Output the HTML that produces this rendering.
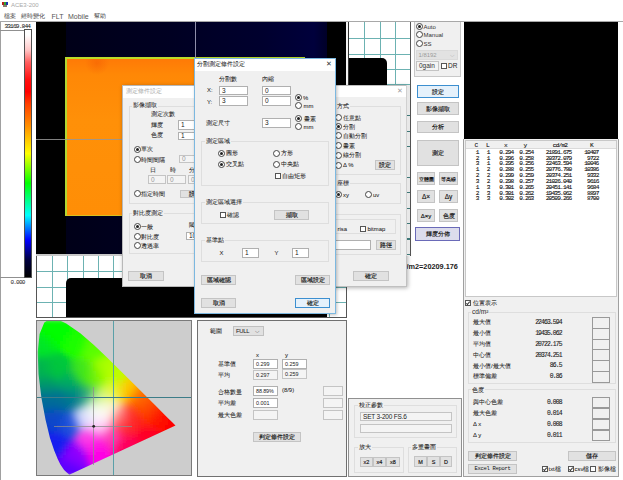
<!DOCTYPE html>
<html><head><meta charset="utf-8">
<style>
*{box-sizing:border-box}
html,body{margin:0;padding:0}
body{width:623px;height:480px;position:relative;overflow:hidden;background:#fff;font-family:"Liberation Sans",sans-serif;font-size:6px;color:#111}
.a{position:absolute}
.t{position:absolute;white-space:nowrap;line-height:6px;height:6px;font-size:5.9px;color:#1c1c1c;-webkit-text-stroke:0.05px currentColor}
.btn{position:absolute;background:#e1e1e1;border:1px solid #c4c4c4;display:flex;align-items:center;justify-content:center;white-space:nowrap;font-size:5.9px;line-height:6px;color:#111;-webkit-text-stroke:0.15px currentColor}
.dbtn{border-color:#3c8fd0;background:#e5f1fb}
.tb{position:absolute;background:#fff;border:1px solid #b0b0b0;font-size:6.5px;line-height:6px;padding-left:2px;display:flex;align-items:center;white-space:nowrap;color:#222}
.tbd{background:#f4f4f4;border-color:#c4c4c4;color:#999}
.rd{position:absolute;width:7px;height:7px;border:1px solid #444;border-radius:50%;background:#fff}
.rd.on::after{content:"";position:absolute;left:1px;top:1px;width:3px;height:3px;background:#222;border-radius:50%}
.ck{position:absolute;width:6px;height:6px;border:1px solid #555;background:#fff}
.ck.on::after{content:"";box-sizing:content-box;position:absolute;left:1.2px;top:-0.2px;width:1.4px;height:3px;border:solid #333;border-width:0 1px 1px 0;transform:rotate(40deg)}
.grp{position:absolute;border:1px solid #dedede}
.dlg{position:absolute;background:#f0f0f0}
.gv{position:absolute;width:1px;background:#3f9898}
.gh{position:absolute;height:1px;background:#3f9898}
</style></head><body>
<div class="a" style="left:2px;top:2px;width:6px;height:3px;background:linear-gradient(90deg,#b82020 0 33%,#30a030 33% 66%,#2030b0 66%)"></div>
<div class="a" style="left:3px;top:5px;width:4px;height:2px;background:#8a7a70"></div>
<div class="t" style="left:11.0px;top:2.3px;font-size:6px;line-height:6px;height:6px;color:#a8a8a8;-webkit-text-stroke:0">ACE3-200</div>
<div class="t" style="left:4.0px;top:13.0px;color:#555">檔案</div>
<div class="t" style="left:21.0px;top:13.0px;color:#555">經時變化</div>
<div class="t" style="left:51.5px;top:12.5px;font-size:7px;line-height:7px;height:7px;color:#555;-webkit-text-stroke:0">FLT</div>
<div class="t" style="left:68.0px;top:12.5px;font-size:7px;line-height:7px;height:7px;color:#555;-webkit-text-stroke:0">Mobile</div>
<div class="t" style="left:94.0px;top:13.0px;color:#555">幫助</div>
<div class="a" style="left:0px;top:21px;width:623px;height:1px;background:#a8a8a8"></div>
<div class="a" style="left:0px;top:22px;width:1px;height:458px;background:#a0a0a0"></div>
<div class="t" style="left:4.4px;top:23.8px;font-family:'Liberation Mono',monospace;font-size:6.2px;letter-spacing:-0.85px;color:#222">33169.844</div>
<div class="a" style="left:0px;top:30px;width:25px;height:1px;background:#909090"></div>
<div class="a" style="left:0px;top:277px;width:25px;height:1px;background:#909090"></div>
<div class="a" style="left:24px;top:29px;width:8px;height:249px;border:1px solid #505050;background:linear-gradient(180deg,#fff 0%,#fff 2%,#ffc8c8 8%,#ff6060 13%,#ff1010 20%,#ff0000 25%,#ff4000 30%,#ff9000 39%,#ffff00 50%,#00ff00 62%,#00ffff 75%,#0000ff 85%,#000040 93%,#000 100%)"></div>
<div class="t" style="left:10.5px;top:279.5px;font-family:'Liberation Mono',monospace;font-size:6px;letter-spacing:-0.8px;color:#333">0.000</div>
<div class="a" style="left:36px;top:22px;width:310px;height:232px;background:#000"></div>
<div class="a" style="left:66px;top:22px;width:261px;height:232px;background:linear-gradient(90deg,#000018 0%,#000022 40%,#00002e 75%,#00003c 95%,#000028 100%)"></div>
<div class="a" style="left:65px;top:57px;width:240px;height:159px;background:radial-gradient(circle at 30px 4px,rgba(235,70,0,.3) 0,rgba(235,70,0,0) 12px),linear-gradient(180deg,#ff7a06 0%,#ff8806 10%,#ff9008 40%,#ff8e06 100%);border-top:2px solid #bcdc28;border-left:2px solid #b0d830;border-bottom:1px solid #d8c020"></div>
<div class="a" style="left:36px;top:139px;width:100px;height:1px;background:rgba(150,150,150,.85)"></div>
<div class="a" style="left:195px;top:22px;width:1px;height:36px;background:#8e8eaa"></div>
<div class="a" style="left:36px;top:254px;width:310px;height:2px;background:#c8c8c8"></div>
<div class="a" style="left:36px;top:256px;width:311px;height:62px;background:#fff;border-left:1px solid #555;border-bottom:1px solid #555"></div>
<div class="a" style="left:52px;top:256px;width:1px;height:61px;background:#6cb2b2"></div>
<div class="a" style="left:67px;top:256px;width:1px;height:61px;background:#6cb2b2"></div>
<div class="a" style="left:83px;top:256px;width:1px;height:61px;background:#6cb2b2"></div>
<div class="a" style="left:98px;top:256px;width:1px;height:61px;background:#6cb2b2"></div>
<div class="a" style="left:113px;top:256px;width:1px;height:61px;background:#6cb2b2"></div>
<div class="a" style="left:129px;top:256px;width:1px;height:61px;background:#6cb2b2"></div>
<div class="a" style="left:144px;top:256px;width:1px;height:61px;background:#6cb2b2"></div>
<div class="a" style="left:160px;top:256px;width:1px;height:61px;background:#6cb2b2"></div>
<div class="a" style="left:175px;top:256px;width:1px;height:61px;background:#6cb2b2"></div>
<div class="a" style="left:190px;top:256px;width:1px;height:61px;background:#6cb2b2"></div>
<div class="a" style="left:206px;top:256px;width:1px;height:61px;background:#6cb2b2"></div>
<div class="a" style="left:221px;top:256px;width:1px;height:61px;background:#6cb2b2"></div>
<div class="a" style="left:237px;top:256px;width:1px;height:61px;background:#6cb2b2"></div>
<div class="a" style="left:252px;top:256px;width:1px;height:61px;background:#6cb2b2"></div>
<div class="a" style="left:267px;top:256px;width:1px;height:61px;background:#6cb2b2"></div>
<div class="a" style="left:283px;top:256px;width:1px;height:61px;background:#6cb2b2"></div>
<div class="a" style="left:298px;top:256px;width:1px;height:61px;background:#6cb2b2"></div>
<div class="a" style="left:314px;top:256px;width:1px;height:61px;background:#6cb2b2"></div>
<div class="a" style="left:329px;top:256px;width:1px;height:61px;background:#6cb2b2"></div>
<div class="a" style="left:37px;top:271px;width:309px;height:1px;background:#6cb2b2"></div>
<div class="a" style="left:37px;top:287px;width:309px;height:1px;background:#6cb2b2"></div>
<div class="a" style="left:37px;top:302px;width:309px;height:1px;background:#6cb2b2"></div>
<div class="a" style="left:66px;top:278px;width:261px;height:39px;background:#000;border-top-left-radius:5px"></div>
<div class="a" style="left:346px;top:256px;width:1px;height:62px;background:#555"></div>
<div class="a" style="left:346px;top:22px;width:3px;height:234px;background:#f4f4f4"></div>
<div class="a" style="left:348px;top:22px;width:62px;height:234px;background:#fff;border-left:1px solid #333"></div>
<div class="a" style="left:364px;top:22px;width:1px;height:234px;background:#6cb2b2"></div>
<div class="a" style="left:380px;top:22px;width:1px;height:234px;background:#6cb2b2"></div>
<div class="a" style="left:395px;top:22px;width:1px;height:234px;background:#6cb2b2"></div>
<div class="a" style="left:349px;top:38px;width:61px;height:1px;background:#6cb2b2"></div>
<div class="a" style="left:349px;top:54px;width:61px;height:1px;background:#6cb2b2"></div>
<div class="a" style="left:349px;top:69px;width:61px;height:1px;background:#6cb2b2"></div>
<div class="a" style="left:349px;top:84px;width:61px;height:2px;background:#6cb2b2"></div>
<div class="a" style="left:349px;top:100px;width:61px;height:1px;background:#6cb2b2"></div>
<div class="a" style="left:349px;top:115px;width:61px;height:1px;background:#6cb2b2"></div>
<div class="a" style="left:349px;top:131px;width:61px;height:1px;background:#6cb2b2"></div>
<div class="a" style="left:349px;top:146px;width:61px;height:1px;background:#6cb2b2"></div>
<div class="a" style="left:349px;top:162px;width:61px;height:0px;background:#6cb2b2"></div>
<div class="a" style="left:349px;top:177px;width:61px;height:1px;background:#6cb2b2"></div>
<div class="a" style="left:349px;top:192px;width:61px;height:1px;background:#6cb2b2"></div>
<div class="a" style="left:349px;top:208px;width:61px;height:1px;background:#6cb2b2"></div>
<div class="a" style="left:349px;top:223px;width:61px;height:1px;background:#6cb2b2"></div>
<div class="a" style="left:349px;top:238px;width:61px;height:2px;background:#6cb2b2"></div>
<div class="a" style="left:349px;top:254px;width:61px;height:1px;background:#6cb2b2"></div>
<div class="a" style="left:349px;top:58px;width:38px;height:198px;background:#000;border-top-right-radius:5px"></div>
<div class="a" style="left:410px;top:22px;width:1px;height:234px;background:#555"></div>
<div class="a" style="left:36px;top:320px;width:156px;height:156px;background:#cdcdcd;border:1px solid #7a7a7a;overflow:hidden"><svg width="156" height="156" viewBox="37 321 156 156" style="position:absolute;left:0;top:0"><defs><clipPath id="hs"><polygon points="69.8,474.6 69.7,474.6 69.3,474.5 68.8,474.2 68.0,473.4 66.5,472.2 64.1,469.9 60.4,464.6 57.7,459.1 54.2,450.5 49.9,437.7 45.6,419.9 41.4,397.7 38.5,374.0 37.7,352.1 39.6,334.1 44.3,322.4 51.0,318.3 58.5,319.8 66.2,323.6 80.3,333.3 93.9,345.0 107.3,357.8 120.7,370.9 133.6,383.8 145.4,395.5 155.2,405.3 167.3,417.4 172.5,422.6 175.5,425.5"/></clipPath><filter id="bl" x="-10%" y="-10%" width="120%" height="120%"><feGaussianBlur stdDeviation="2"/></filter></defs><g clip-path="url(#hs)"><g filter="url(#bl)"><path fill="#00fe00" d="M36 320h3v3h-3z"/><path fill="#00fe00" d="M39 320h3v3h-3z"/><path fill="#00fe00" d="M42 320h3v3h-3z"/><path fill="#00fe00" d="M45 320h3v3h-3z"/><path fill="#00fe00" d="M48 320h3v3h-3z"/><path fill="#00fe00" d="M51 320h3v3h-3z"/><path fill="#00fe00" d="M54 320h3v3h-3z"/><path fill="#00fe00" d="M57 320h3v3h-3z"/><path fill="#00fe00" d="M60 320h3v3h-3z"/><path fill="#00fe00" d="M63 320h3v3h-3z"/><path fill="#01fe00" d="M66 320h3v3h-3z"/><path fill="#03fe00" d="M69 320h3v3h-3z"/><path fill="#07fe00" d="M72 320h3v3h-3z"/><path fill="#00fe00" d="M36 323h3v3h-3z"/><path fill="#00fe00" d="M39 323h3v3h-3z"/><path fill="#00fe00" d="M42 323h3v3h-3z"/><path fill="#00fe00" d="M45 323h3v3h-3z"/><path fill="#00fe00" d="M48 323h3v3h-3z"/><path fill="#00fe00" d="M51 323h3v3h-3z"/><path fill="#00fe00" d="M54 323h3v3h-3z"/><path fill="#00fe00" d="M57 323h3v3h-3z"/><path fill="#00fe00" d="M60 323h3v3h-3z"/><path fill="#01fe00" d="M63 323h3v3h-3z"/><path fill="#02fe00" d="M66 323h3v3h-3z"/><path fill="#05fe00" d="M69 323h3v3h-3z"/><path fill="#0bfe00" d="M72 323h3v3h-3z"/><path fill="#12fe00" d="M75 323h3v3h-3z"/><path fill="#18fe00" d="M78 323h3v3h-3z"/><path fill="#00fd02" d="M36 326h3v3h-3z"/><path fill="#00fd01" d="M39 326h3v3h-3z"/><path fill="#00fe01" d="M42 326h3v3h-3z"/><path fill="#00fe00" d="M45 326h3v3h-3z"/><path fill="#00fe00" d="M48 326h3v3h-3z"/><path fill="#00fe00" d="M51 326h3v3h-3z"/><path fill="#00fe00" d="M54 326h3v3h-3z"/><path fill="#00fe00" d="M57 326h3v3h-3z"/><path fill="#00fe00" d="M60 326h3v3h-3z"/><path fill="#01fe00" d="M63 326h3v3h-3z"/><path fill="#04fe00" d="M66 326h3v3h-3z"/><path fill="#09fe00" d="M69 326h3v3h-3z"/><path fill="#10fe00" d="M72 326h3v3h-3z"/><path fill="#16fe00" d="M75 326h3v3h-3z"/><path fill="#1bfe00" d="M78 326h3v3h-3z"/><path fill="#1dfe00" d="M81 326h3v3h-3z"/><path fill="#00fa06" d="M36 329h3v3h-3z"/><path fill="#00fb05" d="M39 329h3v3h-3z"/><path fill="#00fc04" d="M42 329h3v3h-3z"/><path fill="#00fd02" d="M45 329h3v3h-3z"/><path fill="#00fe01" d="M48 329h3v3h-3z"/><path fill="#00fe00" d="M51 329h3v3h-3z"/><path fill="#00fe00" d="M54 329h3v3h-3z"/><path fill="#00fe00" d="M57 329h3v3h-3z"/><path fill="#01fe00" d="M60 329h3v3h-3z"/><path fill="#02fe00" d="M63 329h3v3h-3z"/><path fill="#06fe00" d="M66 329h3v3h-3z"/><path fill="#0dfe00" d="M69 329h3v3h-3z"/><path fill="#14fe00" d="M72 329h3v3h-3z"/><path fill="#19fe00" d="M75 329h3v3h-3z"/><path fill="#1cfe00" d="M78 329h3v3h-3z"/><path fill="#1ffe00" d="M81 329h3v3h-3z"/><path fill="#24fe00" d="M84 329h3v3h-3z"/><path fill="#00f50f" d="M36 332h3v3h-3z"/><path fill="#00f60d" d="M39 332h3v3h-3z"/><path fill="#00f809" d="M42 332h3v3h-3z"/><path fill="#00fa06" d="M45 332h3v3h-3z"/><path fill="#00fc03" d="M48 332h3v3h-3z"/><path fill="#00fd01" d="M51 332h3v3h-3z"/><path fill="#00fe00" d="M54 332h3v3h-3z"/><path fill="#00fe00" d="M57 332h3v3h-3z"/><path fill="#01fe00" d="M60 332h3v3h-3z"/><path fill="#04fe00" d="M63 332h3v3h-3z"/><path fill="#0afe00" d="M66 332h3v3h-3z"/><path fill="#11fe00" d="M69 332h3v3h-3z"/><path fill="#17fe00" d="M72 332h3v3h-3z"/><path fill="#1bfe00" d="M75 332h3v3h-3z"/><path fill="#1dfe00" d="M78 332h3v3h-3z"/><path fill="#21fe00" d="M81 332h3v3h-3z"/><path fill="#28fe00" d="M84 332h3v3h-3z"/><path fill="#37fe00" d="M87 332h3v3h-3z"/><path fill="#00ee1a" d="M36 335h3v3h-3z"/><path fill="#00f017" d="M39 335h3v3h-3z"/><path fill="#00f312" d="M42 335h3v3h-3z"/><path fill="#00f60d" d="M45 335h3v3h-3z"/><path fill="#00f908" d="M48 335h3v3h-3z"/><path fill="#00fc04" d="M51 335h3v3h-3z"/><path fill="#00fd01" d="M54 335h3v3h-3z"/><path fill="#01fe00" d="M57 335h3v3h-3z"/><path fill="#03fe00" d="M60 335h3v3h-3z"/><path fill="#07fe00" d="M63 335h3v3h-3z"/><path fill="#0efe00" d="M66 335h3v3h-3z"/><path fill="#15fe00" d="M69 335h3v3h-3z"/><path fill="#1afe00" d="M72 335h3v3h-3z"/><path fill="#1cfe00" d="M75 335h3v3h-3z"/><path fill="#1ffe00" d="M78 335h3v3h-3z"/><path fill="#23fe00" d="M81 335h3v3h-3z"/><path fill="#2dfe00" d="M84 335h3v3h-3z"/><path fill="#3ffe00" d="M87 335h3v3h-3z"/><path fill="#4efe00" d="M90 335h3v3h-3z"/><path fill="#56fe00" d="M93 335h3v3h-3z"/><path fill="#00e922" d="M36 338h3v3h-3z"/><path fill="#00ea20" d="M39 338h3v3h-3z"/><path fill="#00ed1c" d="M42 338h3v3h-3z"/><path fill="#00f116" d="M45 338h3v3h-3z"/><path fill="#00f50e" d="M48 338h3v3h-3z"/><path fill="#00f908" d="M51 338h3v3h-3z"/><path fill="#00fc04" d="M54 338h3v3h-3z"/><path fill="#01fd01" d="M57 338h3v3h-3z"/><path fill="#04fe00" d="M60 338h3v3h-3z"/><path fill="#0afe00" d="M63 338h3v3h-3z"/><path fill="#12fe00" d="M66 338h3v3h-3z"/><path fill="#18fe00" d="M69 338h3v3h-3z"/><path fill="#1bfe00" d="M72 338h3v3h-3z"/><path fill="#1dfe00" d="M75 338h3v3h-3z"/><path fill="#20fe00" d="M78 338h3v3h-3z"/><path fill="#26fe00" d="M81 338h3v3h-3z"/><path fill="#34fe00" d="M84 338h3v3h-3z"/><path fill="#45fe00" d="M87 338h3v3h-3z"/><path fill="#52fe00" d="M90 338h3v3h-3z"/><path fill="#57fe00" d="M93 338h3v3h-3z"/><path fill="#59fe00" d="M96 338h3v3h-3z"/><path fill="#00e725" d="M36 341h3v3h-3z"/><path fill="#00e824" d="M39 341h3v3h-3z"/><path fill="#00e922" d="M42 341h3v3h-3z"/><path fill="#00ec1d" d="M45 341h3v3h-3z"/><path fill="#00f016" d="M48 341h3v3h-3z"/><path fill="#00f50e" d="M51 341h3v3h-3z"/><path fill="#00fa07" d="M54 341h3v3h-3z"/><path fill="#02fc03" d="M57 341h3v3h-3z"/><path fill="#07fe01" d="M60 341h3v3h-3z"/><path fill="#0efe00" d="M63 341h3v3h-3z"/><path fill="#15fe00" d="M66 341h3v3h-3z"/><path fill="#1afe00" d="M69 341h3v3h-3z"/><path fill="#1dfe00" d="M72 341h3v3h-3z"/><path fill="#1efe00" d="M75 341h3v3h-3z"/><path fill="#22fe00" d="M78 341h3v3h-3z"/><path fill="#2bfe00" d="M81 341h3v3h-3z"/><path fill="#3bfe00" d="M84 341h3v3h-3z"/><path fill="#4bfe00" d="M87 341h3v3h-3z"/><path fill="#55fe00" d="M90 341h3v3h-3z"/><path fill="#58fe00" d="M93 341h3v3h-3z"/><path fill="#59fe00" d="M96 341h3v3h-3z"/><path fill="#5afe00" d="M99 341h3v3h-3z"/><path fill="#00e627" d="M36 344h3v3h-3z"/><path fill="#00e626" d="M39 344h3v3h-3z"/><path fill="#00e725" d="M42 344h3v3h-3z"/><path fill="#00e922" d="M45 344h3v3h-3z"/><path fill="#00ec1e" d="M48 344h3v3h-3z"/><path fill="#00f016" d="M51 344h3v3h-3z"/><path fill="#01f50e" d="M54 344h3v3h-3z"/><path fill="#03fa07" d="M57 344h3v3h-3z"/><path fill="#09fd02" d="M60 344h3v3h-3z"/><path fill="#12fe00" d="M63 344h3v3h-3z"/><path fill="#18fe00" d="M66 344h3v3h-3z"/><path fill="#1cfe00" d="M69 344h3v3h-3z"/><path fill="#1dfe00" d="M72 344h3v3h-3z"/><path fill="#1ffe00" d="M75 344h3v3h-3z"/><path fill="#25fe00" d="M78 344h3v3h-3z"/><path fill="#30fe00" d="M81 344h3v3h-3z"/><path fill="#42fe00" d="M84 344h3v3h-3z"/><path fill="#50fe00" d="M87 344h3v3h-3z"/><path fill="#56fe00" d="M90 344h3v3h-3z"/><path fill="#59fe00" d="M93 344h3v3h-3z"/><path fill="#5afe00" d="M96 344h3v3h-3z"/><path fill="#5afe00" d="M99 344h3v3h-3z"/><path fill="#5afe00" d="M102 344h3v3h-3z"/><path fill="#00e528" d="M36 347h3v3h-3z"/><path fill="#00e527" d="M39 347h3v3h-3z"/><path fill="#00e627" d="M42 347h3v3h-3z"/><path fill="#00e626" d="M45 347h3v3h-3z"/><path fill="#00e823" d="M48 347h3v3h-3z"/><path fill="#00eb1e" d="M51 347h3v3h-3z"/><path fill="#01ef17" d="M54 347h3v3h-3z"/><path fill="#04f40e" d="M57 347h3v3h-3z"/><path fill="#0bf906" d="M60 347h3v3h-3z"/><path fill="#14fd02" d="M63 347h3v3h-3z"/><path fill="#1afe00" d="M66 347h3v3h-3z"/><path fill="#1cfe00" d="M69 347h3v3h-3z"/><path fill="#1efe00" d="M72 347h3v3h-3z"/><path fill="#21fe00" d="M75 347h3v3h-3z"/><path fill="#28fe00" d="M78 347h3v3h-3z"/><path fill="#37fe00" d="M81 347h3v3h-3z"/><path fill="#49fe00" d="M84 347h3v3h-3z"/><path fill="#53fe00" d="M87 347h3v3h-3z"/><path fill="#58fe00" d="M90 347h3v3h-3z"/><path fill="#59fe00" d="M93 347h3v3h-3z"/><path fill="#5afe00" d="M96 347h3v3h-3z"/><path fill="#5bfe00" d="M99 347h3v3h-3z"/><path fill="#5dfe00" d="M102 347h3v3h-3z"/><path fill="#5ffe00" d="M105 347h3v3h-3z"/><path fill="#00e329" d="M36 350h3v3h-3z"/><path fill="#00e329" d="M39 350h3v3h-3z"/><path fill="#00e329" d="M42 350h3v3h-3z"/><path fill="#00e329" d="M45 350h3v3h-3z"/><path fill="#00e328" d="M48 350h3v3h-3z"/><path fill="#00e327" d="M51 350h3v3h-3z"/><path fill="#00e324" d="M54 350h3v3h-3z"/><path fill="#03e61e" d="M57 350h3v3h-3z"/><path fill="#0aed14" d="M60 350h3v3h-3z"/><path fill="#14f609" d="M63 350h3v3h-3z"/><path fill="#1afb03" d="M66 350h3v3h-3z"/><path fill="#1dfd01" d="M69 350h3v3h-3z"/><path fill="#1ffe00" d="M72 350h3v3h-3z"/><path fill="#23fe00" d="M75 350h3v3h-3z"/><path fill="#2efe00" d="M78 350h3v3h-3z"/><path fill="#3ffe00" d="M81 350h3v3h-3z"/><path fill="#4efe00" d="M84 350h3v3h-3z"/><path fill="#56fe00" d="M87 350h3v3h-3z"/><path fill="#59fe00" d="M90 350h3v3h-3z"/><path fill="#5bfe00" d="M93 350h3v3h-3z"/><path fill="#5dfe00" d="M96 350h3v3h-3z"/><path fill="#5ffe00" d="M99 350h3v3h-3z"/><path fill="#64fe00" d="M102 350h3v3h-3z"/><path fill="#6bfe00" d="M105 350h3v3h-3z"/><path fill="#75fe00" d="M108 350h3v3h-3z"/><path fill="#00dc2f" d="M36 353h3v3h-3z"/><path fill="#00dc2f" d="M39 353h3v3h-3z"/><path fill="#00dc2f" d="M42 353h3v3h-3z"/><path fill="#00da30" d="M45 353h3v3h-3z"/><path fill="#00d831" d="M48 353h3v3h-3z"/><path fill="#00d632" d="M51 353h3v3h-3z"/><path fill="#00d333" d="M54 353h3v3h-3z"/><path fill="#01d232" d="M57 353h3v3h-3z"/><path fill="#04d62c" d="M60 353h3v3h-3z"/><path fill="#0ce21f" d="M63 353h3v3h-3z"/><path fill="#15f00f" d="M66 353h3v3h-3z"/><path fill="#1cf906" d="M69 353h3v3h-3z"/><path fill="#20fc02" d="M72 353h3v3h-3z"/><path fill="#27fd02" d="M75 353h3v3h-3z"/><path fill="#34fd02" d="M78 353h3v3h-3z"/><path fill="#45fd01" d="M81 353h3v3h-3z"/><path fill="#52fd01" d="M84 353h3v3h-3z"/><path fill="#58fe00" d="M87 353h3v3h-3z"/><path fill="#5cfe00" d="M90 353h3v3h-3z"/><path fill="#5ffe00" d="M93 353h3v3h-3z"/><path fill="#64fe00" d="M96 353h3v3h-3z"/><path fill="#6bfe00" d="M99 353h3v3h-3z"/><path fill="#74fe00" d="M102 353h3v3h-3z"/><path fill="#81fe00" d="M105 353h3v3h-3z"/><path fill="#8efe00" d="M108 353h3v3h-3z"/><path fill="#9afe00" d="M111 353h3v3h-3z"/><path fill="#00cc3c" d="M36 356h3v3h-3z"/><path fill="#00cc3b" d="M39 356h3v3h-3z"/><path fill="#00cc3b" d="M42 356h3v3h-3z"/><path fill="#00cb3b" d="M45 356h3v3h-3z"/><path fill="#00ca3b" d="M48 356h3v3h-3z"/><path fill="#00ca3b" d="M51 356h3v3h-3z"/><path fill="#00c93b" d="M54 356h3v3h-3z"/><path fill="#00c93a" d="M57 356h3v3h-3z"/><path fill="#01ca39" d="M60 356h3v3h-3z"/><path fill="#03cf34" d="M63 356h3v3h-3z"/><path fill="#0bda28" d="M66 356h3v3h-3z"/><path fill="#17e917" d="M69 356h3v3h-3z"/><path fill="#23f30d" d="M72 356h3v3h-3z"/><path fill="#2ff50a" d="M75 356h3v3h-3z"/><path fill="#3cf60a" d="M78 356h3v3h-3z"/><path fill="#49f708" d="M81 356h3v3h-3z"/><path fill="#53fa05" d="M84 356h3v3h-3z"/><path fill="#5bfc03" d="M87 356h3v3h-3z"/><path fill="#61fd01" d="M90 356h3v3h-3z"/><path fill="#69fe00" d="M93 356h3v3h-3z"/><path fill="#74fe00" d="M96 356h3v3h-3z"/><path fill="#80fe00" d="M99 356h3v3h-3z"/><path fill="#8cfe00" d="M102 356h3v3h-3z"/><path fill="#98fe00" d="M105 356h3v3h-3z"/><path fill="#a1fe00" d="M108 356h3v3h-3z"/><path fill="#a7fe00" d="M111 356h3v3h-3z"/><path fill="#acfe00" d="M114 356h3v3h-3z"/><path fill="#00bd48" d="M36 359h3v3h-3z"/><path fill="#00bd47" d="M39 359h3v3h-3z"/><path fill="#00bf46" d="M42 359h3v3h-3z"/><path fill="#00c044" d="M45 359h3v3h-3z"/><path fill="#00c341" d="M48 359h3v3h-3z"/><path fill="#00c53f" d="M51 359h3v3h-3z"/><path fill="#00c63d" d="M54 359h3v3h-3z"/><path fill="#00c73c" d="M57 359h3v3h-3z"/><path fill="#00c83c" d="M60 359h3v3h-3z"/><path fill="#01c93a" d="M63 359h3v3h-3z"/><path fill="#05cd36" d="M66 359h3v3h-3z"/><path fill="#14d72c" d="M69 359h3v3h-3z"/><path fill="#29e31f" d="M72 359h3v3h-3z"/><path fill="#36e919" d="M75 359h3v3h-3z"/><path fill="#3eeb17" d="M78 359h3v3h-3z"/><path fill="#46ed13" d="M81 359h3v3h-3z"/><path fill="#50f10f" d="M84 359h3v3h-3z"/><path fill="#5cf509" d="M87 359h3v3h-3z"/><path fill="#6af905" d="M90 359h3v3h-3z"/><path fill="#79fc02" d="M93 359h3v3h-3z"/><path fill="#88fd00" d="M96 359h3v3h-3z"/><path fill="#94fe00" d="M99 359h3v3h-3z"/><path fill="#9efe00" d="M102 359h3v3h-3z"/><path fill="#a4fe00" d="M105 359h3v3h-3z"/><path fill="#a9fe00" d="M108 359h3v3h-3z"/><path fill="#adfe00" d="M111 359h3v3h-3z"/><path fill="#b0fe00" d="M114 359h3v3h-3z"/><path fill="#b4fe00" d="M117 359h3v3h-3z"/><path fill="#00b64d" d="M36 362h3v3h-3z"/><path fill="#00b74c" d="M39 362h3v3h-3z"/><path fill="#00b94a" d="M42 362h3v3h-3z"/><path fill="#00bc47" d="M45 362h3v3h-3z"/><path fill="#00c043" d="M48 362h3v3h-3z"/><path fill="#00c340" d="M51 362h3v3h-3z"/><path fill="#00c53e" d="M54 362h3v3h-3z"/><path fill="#00c63d" d="M57 362h3v3h-3z"/><path fill="#00c73c" d="M60 362h3v3h-3z"/><path fill="#01c73c" d="M63 362h3v3h-3z"/><path fill="#05c93a" d="M66 362h3v3h-3z"/><path fill="#16d132" d="M69 362h3v3h-3z"/><path fill="#2cdd26" d="M72 362h3v3h-3z"/><path fill="#38e41f" d="M75 362h3v3h-3z"/><path fill="#3ee61c" d="M78 362h3v3h-3z"/><path fill="#43e819" d="M81 362h3v3h-3z"/><path fill="#4beb15" d="M84 362h3v3h-3z"/><path fill="#59ef10" d="M87 362h3v3h-3z"/><path fill="#6df409" d="M90 362h3v3h-3z"/><path fill="#82f904" d="M93 362h3v3h-3z"/><path fill="#93fc01" d="M96 362h3v3h-3z"/><path fill="#9efd00" d="M99 362h3v3h-3z"/><path fill="#a4fe00" d="M102 362h3v3h-3z"/><path fill="#a9fe00" d="M105 362h3v3h-3z"/><path fill="#adfe00" d="M108 362h3v3h-3z"/><path fill="#b0fe00" d="M111 362h3v3h-3z"/><path fill="#b3fe00" d="M114 362h3v3h-3z"/><path fill="#b6fe00" d="M117 362h3v3h-3z"/><path fill="#b8fe00" d="M120 362h3v3h-3z"/><path fill="#00b44f" d="M36 365h3v3h-3z"/><path fill="#00b54e" d="M39 365h3v3h-3z"/><path fill="#00b74c" d="M42 365h3v3h-3z"/><path fill="#00ba49" d="M45 365h3v3h-3z"/><path fill="#00be45" d="M48 365h3v3h-3z"/><path fill="#00c241" d="M51 365h3v3h-3z"/><path fill="#00c43f" d="M54 365h3v3h-3z"/><path fill="#00c63d" d="M57 365h3v3h-3z"/><path fill="#00c63d" d="M60 365h3v3h-3z"/><path fill="#01c63d" d="M63 365h3v3h-3z"/><path fill="#07c83d" d="M66 365h3v3h-3z"/><path fill="#18cf36" d="M69 365h3v3h-3z"/><path fill="#2dda2a" d="M72 365h3v3h-3z"/><path fill="#38e122" d="M75 365h3v3h-3z"/><path fill="#3de51e" d="M78 365h3v3h-3z"/><path fill="#42e71b" d="M81 365h3v3h-3z"/><path fill="#4ae917" d="M84 365h3v3h-3z"/><path fill="#57ed12" d="M87 365h3v3h-3z"/><path fill="#6af10b" d="M90 365h3v3h-3z"/><path fill="#80f606" d="M93 365h3v3h-3z"/><path fill="#92fa02" d="M96 365h3v3h-3z"/><path fill="#9efc00" d="M99 365h3v3h-3z"/><path fill="#a5fd00" d="M102 365h3v3h-3z"/><path fill="#aafe00" d="M105 365h3v3h-3z"/><path fill="#aefe00" d="M108 365h3v3h-3z"/><path fill="#b2fe00" d="M111 365h3v3h-3z"/><path fill="#b5fe00" d="M114 365h3v3h-3z"/><path fill="#b8fe00" d="M117 365h3v3h-3z"/><path fill="#bafe00" d="M120 365h3v3h-3z"/><path fill="#bcfe00" d="M123 365h3v3h-3z"/><path fill="#00b350" d="M36 368h3v3h-3z"/><path fill="#00b44f" d="M39 368h3v3h-3z"/><path fill="#00b64d" d="M42 368h3v3h-3z"/><path fill="#00b94a" d="M45 368h3v3h-3z"/><path fill="#00bd46" d="M48 368h3v3h-3z"/><path fill="#00c043" d="M51 368h3v3h-3z"/><path fill="#00c340" d="M54 368h3v3h-3z"/><path fill="#00c53f" d="M57 368h3v3h-3z"/><path fill="#00c53f" d="M60 368h3v3h-3z"/><path fill="#01c440" d="M63 368h3v3h-3z"/><path fill="#08c441" d="M66 368h3v3h-3z"/><path fill="#18cb3b" d="M69 368h3v3h-3z"/><path fill="#2ad62f" d="M72 368h3v3h-3z"/><path fill="#35df25" d="M75 368h3v3h-3z"/><path fill="#3ce31f" d="M78 368h3v3h-3z"/><path fill="#42e61b" d="M81 368h3v3h-3z"/><path fill="#4ae917" d="M84 368h3v3h-3z"/><path fill="#55ec12" d="M87 368h3v3h-3z"/><path fill="#66f00c" d="M90 368h3v3h-3z"/><path fill="#7af406" d="M93 368h3v3h-3z"/><path fill="#8cf803" d="M96 368h3v3h-3z"/><path fill="#9afb01" d="M99 368h3v3h-3z"/><path fill="#a4fd00" d="M102 368h3v3h-3z"/><path fill="#abfe00" d="M105 368h3v3h-3z"/><path fill="#b0fe00" d="M108 368h3v3h-3z"/><path fill="#b4fe00" d="M111 368h3v3h-3z"/><path fill="#b7fe00" d="M114 368h3v3h-3z"/><path fill="#bafe00" d="M117 368h3v3h-3z"/><path fill="#bcfe00" d="M120 368h3v3h-3z"/><path fill="#befd00" d="M123 368h3v3h-3z"/><path fill="#c1fb00" d="M126 368h3v3h-3z"/><path fill="#00b152" d="M36 371h3v3h-3z"/><path fill="#00b152" d="M39 371h3v3h-3z"/><path fill="#00b350" d="M42 371h3v3h-3z"/><path fill="#00b54e" d="M45 371h3v3h-3z"/><path fill="#00b94a" d="M48 371h3v3h-3z"/><path fill="#00bd46" d="M51 371h3v3h-3z"/><path fill="#00c143" d="M54 371h3v3h-3z"/><path fill="#00c241" d="M57 371h3v3h-3z"/><path fill="#00c243" d="M60 371h3v3h-3z"/><path fill="#02bf47" d="M63 371h3v3h-3z"/><path fill="#08be4a" d="M66 371h3v3h-3z"/><path fill="#14c344" d="M69 371h3v3h-3z"/><path fill="#24cf37" d="M72 371h3v3h-3z"/><path fill="#31da2b" d="M75 371h3v3h-3z"/><path fill="#3ae122" d="M78 371h3v3h-3z"/><path fill="#42e51c" d="M81 371h3v3h-3z"/><path fill="#4ae818" d="M84 371h3v3h-3z"/><path fill="#56eb12" d="M87 371h3v3h-3z"/><path fill="#64ef0c" d="M90 371h3v3h-3z"/><path fill="#75f307" d="M93 371h3v3h-3z"/><path fill="#85f703" d="M96 371h3v3h-3z"/><path fill="#94fa01" d="M99 371h3v3h-3z"/><path fill="#a1fc00" d="M102 371h3v3h-3z"/><path fill="#aafd00" d="M105 371h3v3h-3z"/><path fill="#b1fe00" d="M108 371h3v3h-3z"/><path fill="#b6fe00" d="M111 371h3v3h-3z"/><path fill="#bafe00" d="M114 371h3v3h-3z"/><path fill="#bcfe00" d="M117 371h3v3h-3z"/><path fill="#bffc00" d="M120 371h3v3h-3z"/><path fill="#c2fa00" d="M123 371h3v3h-3z"/><path fill="#c8f500" d="M126 371h3v3h-3z"/><path fill="#d2ed00" d="M129 371h3v3h-3z"/><path fill="#00ad56" d="M36 374h3v3h-3z"/><path fill="#00ad56" d="M39 374h3v3h-3z"/><path fill="#00ad56" d="M42 374h3v3h-3z"/><path fill="#00af54" d="M45 374h3v3h-3z"/><path fill="#00b351" d="M48 374h3v3h-3z"/><path fill="#00b74c" d="M51 374h3v3h-3z"/><path fill="#00bb48" d="M54 374h3v3h-3z"/><path fill="#00bd47" d="M57 374h3v3h-3z"/><path fill="#00bc4a" d="M60 374h3v3h-3z"/><path fill="#02b850" d="M63 374h3v3h-3z"/><path fill="#06b653" d="M66 374h3v3h-3z"/><path fill="#0fbb4e" d="M69 374h3v3h-3z"/><path fill="#1cc642" d="M72 374h3v3h-3z"/><path fill="#2bd333" d="M75 374h3v3h-3z"/><path fill="#37dc27" d="M78 374h3v3h-3z"/><path fill="#41e31f" d="M81 374h3v3h-3z"/><path fill="#4be719" d="M84 374h3v3h-3z"/><path fill="#56eb12" d="M87 374h3v3h-3z"/><path fill="#63ef0c" d="M90 374h3v3h-3z"/><path fill="#71f207" d="M93 374h3v3h-3z"/><path fill="#80f504" d="M96 374h3v3h-3z"/><path fill="#8ff802" d="M99 374h3v3h-3z"/><path fill="#9efb02" d="M102 374h3v3h-3z"/><path fill="#aafc02" d="M105 374h3v3h-3z"/><path fill="#b4fd02" d="M108 374h3v3h-3z"/><path fill="#b9fe02" d="M111 374h3v3h-3z"/><path fill="#bdfd02" d="M114 374h3v3h-3z"/><path fill="#c0fc02" d="M117 374h3v3h-3z"/><path fill="#c4f902" d="M120 374h3v3h-3z"/><path fill="#caf401" d="M123 374h3v3h-3z"/><path fill="#d5eb01" d="M126 374h3v3h-3z"/><path fill="#e1e000" d="M129 374h3v3h-3z"/><path fill="#edd500" d="M132 374h3v3h-3z"/><path fill="#00a75c" d="M36 377h3v3h-3z"/><path fill="#00a65d" d="M39 377h3v3h-3z"/><path fill="#00a55e" d="M42 377h3v3h-3z"/><path fill="#00a65d" d="M45 377h3v3h-3z"/><path fill="#00a95a" d="M48 377h3v3h-3z"/><path fill="#00ad56" d="M51 377h3v3h-3z"/><path fill="#00b252" d="M54 377h3v3h-3z"/><path fill="#00b551" d="M57 377h3v3h-3z"/><path fill="#00b454" d="M60 377h3v3h-3z"/><path fill="#01b05a" d="M63 377h3v3h-3z"/><path fill="#04b05b" d="M66 377h3v3h-3z"/><path fill="#0ab357" d="M69 377h3v3h-3z"/><path fill="#14bc4d" d="M72 377h3v3h-3z"/><path fill="#22c93f" d="M75 377h3v3h-3z"/><path fill="#31d530" d="M78 377h3v3h-3z"/><path fill="#3ede25" d="M81 377h3v3h-3z"/><path fill="#4ae41c" d="M84 377h3v3h-3z"/><path fill="#56e915" d="M87 377h3v3h-3z"/><path fill="#63ed0f" d="M90 377h3v3h-3z"/><path fill="#70f10a" d="M93 377h3v3h-3z"/><path fill="#7df407" d="M96 377h3v3h-3z"/><path fill="#8bf705" d="M99 377h3v3h-3z"/><path fill="#9df906" d="M102 377h3v3h-3z"/><path fill="#adfb07" d="M105 377h3v3h-3z"/><path fill="#b8fd07" d="M108 377h3v3h-3z"/><path fill="#befc07" d="M111 377h3v3h-3z"/><path fill="#c3fb07" d="M114 377h3v3h-3z"/><path fill="#c7f806" d="M117 377h3v3h-3z"/><path fill="#cef305" d="M120 377h3v3h-3z"/><path fill="#d8ea03" d="M123 377h3v3h-3z"/><path fill="#e4de02" d="M126 377h3v3h-3z"/><path fill="#efd401" d="M129 377h3v3h-3z"/><path fill="#f7cb00" d="M132 377h3v3h-3z"/><path fill="#fbc300" d="M135 377h3v3h-3z"/><path fill="#009f64" d="M36 380h3v3h-3z"/><path fill="#009e65" d="M39 380h3v3h-3z"/><path fill="#009d66" d="M42 380h3v3h-3z"/><path fill="#009e65" d="M45 380h3v3h-3z"/><path fill="#009f64" d="M48 380h3v3h-3z"/><path fill="#00a261" d="M51 380h3v3h-3z"/><path fill="#00a75e" d="M54 380h3v3h-3z"/><path fill="#00aa5d" d="M57 380h3v3h-3z"/><path fill="#00ab5f" d="M60 380h3v3h-3z"/><path fill="#01aa61" d="M63 380h3v3h-3z"/><path fill="#02aa61" d="M66 380h3v3h-3z"/><path fill="#06ad5f" d="M69 380h3v3h-3z"/><path fill="#0db358" d="M72 380h3v3h-3z"/><path fill="#19bd4d" d="M75 380h3v3h-3z"/><path fill="#28c93f" d="M78 380h3v3h-3z"/><path fill="#38d432" d="M81 380h3v3h-3z"/><path fill="#47dd27" d="M84 380h3v3h-3z"/><path fill="#55e41e" d="M87 380h3v3h-3z"/><path fill="#63e916" d="M90 380h3v3h-3z"/><path fill="#70ee11" d="M93 380h3v3h-3z"/><path fill="#7df20e" d="M96 380h3v3h-3z"/><path fill="#8ef50e" d="M99 380h3v3h-3z"/><path fill="#a1f810" d="M102 380h3v3h-3z"/><path fill="#b4fa12" d="M105 380h3v3h-3z"/><path fill="#c1fb13" d="M108 380h3v3h-3z"/><path fill="#c8fa12" d="M111 380h3v3h-3z"/><path fill="#cdf810" d="M114 380h3v3h-3z"/><path fill="#d3f20d" d="M117 380h3v3h-3z"/><path fill="#dce909" d="M120 380h3v3h-3z"/><path fill="#e7de06" d="M123 380h3v3h-3z"/><path fill="#f1d403" d="M126 380h3v3h-3z"/><path fill="#f8cb01" d="M129 380h3v3h-3z"/><path fill="#fbc400" d="M132 380h3v3h-3z"/><path fill="#fdbb00" d="M135 380h3v3h-3z"/><path fill="#feae00" d="M138 380h3v3h-3z"/><path fill="#00976c" d="M36 383h3v3h-3z"/><path fill="#00966d" d="M39 383h3v3h-3z"/><path fill="#00966d" d="M42 383h3v3h-3z"/><path fill="#00966d" d="M45 383h3v3h-3z"/><path fill="#00976c" d="M48 383h3v3h-3z"/><path fill="#00996b" d="M51 383h3v3h-3z"/><path fill="#009c69" d="M54 383h3v3h-3z"/><path fill="#009f68" d="M57 383h3v3h-3z"/><path fill="#00a268" d="M60 383h3v3h-3z"/><path fill="#00a468" d="M63 383h3v3h-3z"/><path fill="#01a567" d="M66 383h3v3h-3z"/><path fill="#04a666" d="M69 383h3v3h-3z"/><path fill="#08a963" d="M72 383h3v3h-3z"/><path fill="#11af5d" d="M75 383h3v3h-3z"/><path fill="#1fb953" d="M78 383h3v3h-3z"/><path fill="#2fc448" d="M81 383h3v3h-3z"/><path fill="#40cf3d" d="M84 383h3v3h-3z"/><path fill="#50d832" d="M87 383h3v3h-3z"/><path fill="#61e12a" d="M90 383h3v3h-3z"/><path fill="#72e824" d="M93 383h3v3h-3z"/><path fill="#84ee22" d="M96 383h3v3h-3z"/><path fill="#98f323" d="M99 383h3v3h-3z"/><path fill="#aff725" d="M102 383h3v3h-3z"/><path fill="#c2f926" d="M105 383h3v3h-3z"/><path fill="#cef925" d="M108 383h3v3h-3z"/><path fill="#d4f822" d="M111 383h3v3h-3z"/><path fill="#d9f41d" d="M114 383h3v3h-3z"/><path fill="#e0ec16" d="M117 383h3v3h-3z"/><path fill="#e8e10e" d="M120 383h3v3h-3z"/><path fill="#f1d608" d="M123 383h3v3h-3z"/><path fill="#f8cd03" d="M126 383h3v3h-3z"/><path fill="#fbc601" d="M129 383h3v3h-3z"/><path fill="#fdbe00" d="M132 383h3v3h-3z"/><path fill="#feb200" d="M135 383h3v3h-3z"/><path fill="#fea100" d="M138 383h3v3h-3z"/><path fill="#fe8e00" d="M141 383h3v3h-3z"/><path fill="#008f74" d="M36 386h3v3h-3z"/><path fill="#008f74" d="M39 386h3v3h-3z"/><path fill="#008f74" d="M42 386h3v3h-3z"/><path fill="#008f74" d="M45 386h3v3h-3z"/><path fill="#008f74" d="M48 386h3v3h-3z"/><path fill="#009074" d="M51 386h3v3h-3z"/><path fill="#009174" d="M54 386h3v3h-3z"/><path fill="#009473" d="M57 386h3v3h-3z"/><path fill="#009871" d="M60 386h3v3h-3z"/><path fill="#009b6f" d="M63 386h3v3h-3z"/><path fill="#019d6e" d="M66 386h3v3h-3z"/><path fill="#029e6e" d="M69 386h3v3h-3z"/><path fill="#069f6d" d="M72 386h3v3h-3z"/><path fill="#0da36c" d="M75 386h3v3h-3z"/><path fill="#18a967" d="M78 386h3v3h-3z"/><path fill="#27b261" d="M81 386h3v3h-3z"/><path fill="#37bd59" d="M84 386h3v3h-3z"/><path fill="#4ac850" d="M87 386h3v3h-3z"/><path fill="#60d448" d="M90 386h3v3h-3z"/><path fill="#78e043" d="M93 386h3v3h-3z"/><path fill="#91ea41" d="M96 386h3v3h-3z"/><path fill="#aaf142" d="M99 386h3v3h-3z"/><path fill="#c0f541" d="M102 386h3v3h-3z"/><path fill="#d0f83d" d="M105 386h3v3h-3z"/><path fill="#d9f838" d="M108 386h3v3h-3z"/><path fill="#def631" d="M111 386h3v3h-3z"/><path fill="#e3f129" d="M114 386h3v3h-3z"/><path fill="#e9e71e" d="M117 386h3v3h-3z"/><path fill="#f0dc12" d="M120 386h3v3h-3z"/><path fill="#f7d109" d="M123 386h3v3h-3z"/><path fill="#fbc904" d="M126 386h3v3h-3z"/><path fill="#fdc101" d="M129 386h3v3h-3z"/><path fill="#feb600" d="M132 386h3v3h-3z"/><path fill="#fea600" d="M135 386h3v3h-3z"/><path fill="#fe9300" d="M138 386h3v3h-3z"/><path fill="#fe8200" d="M141 386h3v3h-3z"/><path fill="#fe7600" d="M144 386h3v3h-3z"/><path fill="#00857e" d="M36 389h3v3h-3z"/><path fill="#00857e" d="M39 389h3v3h-3z"/><path fill="#00867d" d="M42 389h3v3h-3z"/><path fill="#00867d" d="M45 389h3v3h-3z"/><path fill="#00867d" d="M48 389h3v3h-3z"/><path fill="#00857e" d="M51 389h3v3h-3z"/><path fill="#00857f" d="M54 389h3v3h-3z"/><path fill="#00867f" d="M57 389h3v3h-3z"/><path fill="#008b7d" d="M60 389h3v3h-3z"/><path fill="#008f7a" d="M63 389h3v3h-3z"/><path fill="#019278" d="M66 389h3v3h-3z"/><path fill="#029478" d="M69 389h3v3h-3z"/><path fill="#059578" d="M72 389h3v3h-3z"/><path fill="#0c9778" d="M75 389h3v3h-3z"/><path fill="#159d76" d="M78 389h3v3h-3z"/><path fill="#22a672" d="M81 389h3v3h-3z"/><path fill="#32b16e" d="M84 389h3v3h-3z"/><path fill="#48bd69" d="M87 389h3v3h-3z"/><path fill="#63cc65" d="M90 389h3v3h-3z"/><path fill="#82da62" d="M93 389h3v3h-3z"/><path fill="#a0e761" d="M96 389h3v3h-3z"/><path fill="#b9f05f" d="M99 389h3v3h-3z"/><path fill="#cbf55a" d="M102 389h3v3h-3z"/><path fill="#d8f752" d="M105 389h3v3h-3z"/><path fill="#dff748" d="M108 389h3v3h-3z"/><path fill="#e4f53f" d="M111 389h3v3h-3z"/><path fill="#e8f033" d="M114 389h3v3h-3z"/><path fill="#ede625" d="M117 389h3v3h-3z"/><path fill="#f4da16" d="M120 389h3v3h-3z"/><path fill="#f9ce0a" d="M123 389h3v3h-3z"/><path fill="#fcc504" d="M126 389h3v3h-3z"/><path fill="#feba01" d="M129 389h3v3h-3z"/><path fill="#feab00" d="M132 389h3v3h-3z"/><path fill="#fe9800" d="M135 389h3v3h-3z"/><path fill="#fe8500" d="M138 389h3v3h-3z"/><path fill="#fe7700" d="M141 389h3v3h-3z"/><path fill="#fe6e00" d="M144 389h3v3h-3z"/><path fill="#fe6800" d="M147 389h3v3h-3z"/><path fill="#007a89" d="M36 392h3v3h-3z"/><path fill="#007b88" d="M39 392h3v3h-3z"/><path fill="#007b88" d="M42 392h3v3h-3z"/><path fill="#007b88" d="M45 392h3v3h-3z"/><path fill="#007b88" d="M48 392h3v3h-3z"/><path fill="#007b89" d="M51 392h3v3h-3z"/><path fill="#007a8a" d="M54 392h3v3h-3z"/><path fill="#007b8a" d="M57 392h3v3h-3z"/><path fill="#007e88" d="M60 392h3v3h-3z"/><path fill="#008385" d="M63 392h3v3h-3z"/><path fill="#008682" d="M66 392h3v3h-3z"/><path fill="#028981" d="M69 392h3v3h-3z"/><path fill="#058b81" d="M72 392h3v3h-3z"/><path fill="#0b8f80" d="M75 392h3v3h-3z"/><path fill="#15967f" d="M78 392h3v3h-3z"/><path fill="#22a07c" d="M81 392h3v3h-3z"/><path fill="#33ac7a" d="M84 392h3v3h-3z"/><path fill="#4cba78" d="M87 392h3v3h-3z"/><path fill="#6cca77" d="M90 392h3v3h-3z"/><path fill="#8eda77" d="M93 392h3v3h-3z"/><path fill="#ade877" d="M96 392h3v3h-3z"/><path fill="#c3f075" d="M99 392h3v3h-3z"/><path fill="#d2f56f" d="M102 392h3v3h-3z"/><path fill="#dcf766" d="M105 392h3v3h-3z"/><path fill="#e3f75b" d="M108 392h3v3h-3z"/><path fill="#e7f54f" d="M111 392h3v3h-3z"/><path fill="#eaf040" d="M114 392h3v3h-3z"/><path fill="#efe62e" d="M117 392h3v3h-3z"/><path fill="#f5d91b" d="M120 392h3v3h-3z"/><path fill="#facc0d" d="M123 392h3v3h-3z"/><path fill="#fcbf05" d="M126 392h3v3h-3z"/><path fill="#feb001" d="M129 392h3v3h-3z"/><path fill="#fe9d00" d="M132 392h3v3h-3z"/><path fill="#fe8900" d="M135 392h3v3h-3z"/><path fill="#fe7a00" d="M138 392h3v3h-3z"/><path fill="#fe6f00" d="M141 392h3v3h-3z"/><path fill="#fe6800" d="M144 392h3v3h-3z"/><path fill="#fe6300" d="M147 392h3v3h-3z"/><path fill="#fe5e00" d="M150 392h3v3h-3z"/><path fill="#007291" d="M36 395h3v3h-3z"/><path fill="#007291" d="M39 395h3v3h-3z"/><path fill="#007291" d="M42 395h3v3h-3z"/><path fill="#007390" d="M45 395h3v3h-3z"/><path fill="#007390" d="M48 395h3v3h-3z"/><path fill="#007291" d="M51 395h3v3h-3z"/><path fill="#007291" d="M54 395h3v3h-3z"/><path fill="#007391" d="M57 395h3v3h-3z"/><path fill="#00768f" d="M60 395h3v3h-3z"/><path fill="#00798d" d="M63 395h3v3h-3z"/><path fill="#007d8a" d="M66 395h3v3h-3z"/><path fill="#028089" d="M69 395h3v3h-3z"/><path fill="#058488" d="M72 395h3v3h-3z"/><path fill="#0c8a86" d="M75 395h3v3h-3z"/><path fill="#169285" d="M78 395h3v3h-3z"/><path fill="#259e83" d="M81 395h3v3h-3z"/><path fill="#3aac82" d="M84 395h3v3h-3z"/><path fill="#57bc83" d="M87 395h3v3h-3z"/><path fill="#7bce86" d="M90 395h3v3h-3z"/><path fill="#9edf88" d="M93 395h3v3h-3z"/><path fill="#b9eb8a" d="M96 395h3v3h-3z"/><path fill="#ccf289" d="M99 395h3v3h-3z"/><path fill="#d8f586" d="M102 395h3v3h-3z"/><path fill="#e1f77f" d="M105 395h3v3h-3z"/><path fill="#e6f774" d="M108 395h3v3h-3z"/><path fill="#eaf566" d="M111 395h3v3h-3z"/><path fill="#edf054" d="M114 395h3v3h-3z"/><path fill="#f1e63d" d="M117 395h3v3h-3z"/><path fill="#f6d824" d="M120 395h3v3h-3z"/><path fill="#fac711" d="M123 395h3v3h-3z"/><path fill="#fdb607" d="M126 395h3v3h-3z"/><path fill="#fea202" d="M129 395h3v3h-3z"/><path fill="#fe8d01" d="M132 395h3v3h-3z"/><path fill="#fe7c00" d="M135 395h3v3h-3z"/><path fill="#fe7000" d="M138 395h3v3h-3z"/><path fill="#fe6900" d="M141 395h3v3h-3z"/><path fill="#fe6300" d="M144 395h3v3h-3z"/><path fill="#fe5e00" d="M147 395h3v3h-3z"/><path fill="#fe5900" d="M150 395h3v3h-3z"/><path fill="#fe5300" d="M153 395h3v3h-3z"/><path fill="#006d96" d="M36 398h3v3h-3z"/><path fill="#006d96" d="M39 398h3v3h-3z"/><path fill="#006d96" d="M42 398h3v3h-3z"/><path fill="#006d96" d="M45 398h3v3h-3z"/><path fill="#006d96" d="M48 398h3v3h-3z"/><path fill="#006e96" d="M51 398h3v3h-3z"/><path fill="#006e95" d="M54 398h3v3h-3z"/><path fill="#006f94" d="M57 398h3v3h-3z"/><path fill="#007193" d="M60 398h3v3h-3z"/><path fill="#007491" d="M63 398h3v3h-3z"/><path fill="#01778f" d="M66 398h3v3h-3z"/><path fill="#027b8e" d="M69 398h3v3h-3z"/><path fill="#06808d" d="M72 398h3v3h-3z"/><path fill="#0e878b" d="M75 398h3v3h-3z"/><path fill="#1a918a" d="M78 398h3v3h-3z"/><path fill="#2d9f8a" d="M81 398h3v3h-3z"/><path fill="#49b08d" d="M84 398h3v3h-3z"/><path fill="#6dc492" d="M87 398h3v3h-3z"/><path fill="#92d698" d="M90 398h3v3h-3z"/><path fill="#b2e59d" d="M93 398h3v3h-3z"/><path fill="#c8ef9f" d="M96 398h3v3h-3z"/><path fill="#d6f4a0" d="M99 398h3v3h-3z"/><path fill="#e0f79f" d="M102 398h3v3h-3z"/><path fill="#e6f79b" d="M105 398h3v3h-3z"/><path fill="#ebf793" d="M108 398h3v3h-3z"/><path fill="#eef586" d="M111 398h3v3h-3z"/><path fill="#f0f074" d="M114 398h3v3h-3z"/><path fill="#f3e559" d="M117 398h3v3h-3z"/><path fill="#f7d438" d="M120 398h3v3h-3z"/><path fill="#fbbe1c" d="M123 398h3v3h-3z"/><path fill="#fda70c" d="M126 398h3v3h-3z"/><path fill="#fe9005" d="M129 398h3v3h-3z"/><path fill="#fe7d02" d="M132 398h3v3h-3z"/><path fill="#fe7001" d="M135 398h3v3h-3z"/><path fill="#fe6800" d="M138 398h3v3h-3z"/><path fill="#fe6200" d="M141 398h3v3h-3z"/><path fill="#fe5e00" d="M144 398h3v3h-3z"/><path fill="#fe5800" d="M147 398h3v3h-3z"/><path fill="#fe5300" d="M150 398h3v3h-3z"/><path fill="#fe4c00" d="M153 398h3v3h-3z"/><path fill="#fe4500" d="M156 398h3v3h-3z"/><path fill="#006a99" d="M36 401h3v3h-3z"/><path fill="#006a99" d="M39 401h3v3h-3z"/><path fill="#006a99" d="M42 401h3v3h-3z"/><path fill="#006a99" d="M45 401h3v3h-3z"/><path fill="#006a99" d="M48 401h3v3h-3z"/><path fill="#006a99" d="M51 401h3v3h-3z"/><path fill="#006b98" d="M54 401h3v3h-3z"/><path fill="#006d97" d="M57 401h3v3h-3z"/><path fill="#006e96" d="M60 401h3v3h-3z"/><path fill="#007194" d="M63 401h3v3h-3z"/><path fill="#017493" d="M66 401h3v3h-3z"/><path fill="#047892" d="M69 401h3v3h-3z"/><path fill="#0a7e91" d="M72 401h3v3h-3z"/><path fill="#158892" d="M75 401h3v3h-3z"/><path fill="#289594" d="M78 401h3v3h-3z"/><path fill="#43a699" d="M81 401h3v3h-3z"/><path fill="#67bba1" d="M84 401h3v3h-3z"/><path fill="#8ed0aa" d="M87 401h3v3h-3z"/><path fill="#b0e1b2" d="M90 401h3v3h-3z"/><path fill="#c9edb7" d="M93 401h3v3h-3z"/><path fill="#d8f3b8" d="M96 401h3v3h-3z"/><path fill="#e2f7b9" d="M99 401h3v3h-3z"/><path fill="#e9f8b8" d="M102 401h3v3h-3z"/><path fill="#edf8b6" d="M105 401h3v3h-3z"/><path fill="#f1f7b1" d="M108 401h3v3h-3z"/><path fill="#f3f3a7" d="M111 401h3v3h-3z"/><path fill="#f5ec97" d="M114 401h3v3h-3z"/><path fill="#f7de7e" d="M117 401h3v3h-3z"/><path fill="#f9c75a" d="M120 401h3v3h-3z"/><path fill="#fcab34" d="M123 401h3v3h-3z"/><path fill="#fe8f19" d="M126 401h3v3h-3z"/><path fill="#fe7a0b" d="M129 401h3v3h-3z"/><path fill="#fe6d05" d="M132 401h3v3h-3z"/><path fill="#fe6602" d="M135 401h3v3h-3z"/><path fill="#fe6101" d="M138 401h3v3h-3z"/><path fill="#fe5c00" d="M141 401h3v3h-3z"/><path fill="#fe5800" d="M144 401h3v3h-3z"/><path fill="#fe5300" d="M147 401h3v3h-3z"/><path fill="#fe4d00" d="M150 401h3v3h-3z"/><path fill="#fe4600" d="M153 401h3v3h-3z"/><path fill="#fe3e00" d="M156 401h3v3h-3z"/><path fill="#fe3600" d="M159 401h3v3h-3z"/><path fill="#00699a" d="M36 404h3v3h-3z"/><path fill="#00699b" d="M39 404h3v3h-3z"/><path fill="#00689b" d="M42 404h3v3h-3z"/><path fill="#00679c" d="M45 404h3v3h-3z"/><path fill="#01679d" d="M48 404h3v3h-3z"/><path fill="#01669e" d="M51 404h3v3h-3z"/><path fill="#01679d" d="M54 404h3v3h-3z"/><path fill="#01699c" d="M57 404h3v3h-3z"/><path fill="#016b9a" d="M60 404h3v3h-3z"/><path fill="#026e98" d="M63 404h3v3h-3z"/><path fill="#047198" d="M66 404h3v3h-3z"/><path fill="#097798" d="M69 404h3v3h-3z"/><path fill="#15819a" d="M72 404h3v3h-3z"/><path fill="#2a8ea0" d="M75 404h3v3h-3z"/><path fill="#48a0a8" d="M78 404h3v3h-3z"/><path fill="#6db6b4" d="M81 404h3v3h-3z"/><path fill="#93ccbf" d="M84 404h3v3h-3z"/><path fill="#b5dec9" d="M87 404h3v3h-3z"/><path fill="#cdebcf" d="M90 404h3v3h-3z"/><path fill="#ddf3d1" d="M93 404h3v3h-3z"/><path fill="#e7f7d1" d="M96 404h3v3h-3z"/><path fill="#ecf9d0" d="M99 404h3v3h-3z"/><path fill="#f1f9cf" d="M102 404h3v3h-3z"/><path fill="#f4f8cc" d="M105 404h3v3h-3z"/><path fill="#f6f5c7" d="M108 404h3v3h-3z"/><path fill="#f8efbf" d="M111 404h3v3h-3z"/><path fill="#f9e2b1" d="M114 404h3v3h-3z"/><path fill="#fbcd9a" d="M117 404h3v3h-3z"/><path fill="#fcb07a" d="M120 404h3v3h-3z"/><path fill="#fd8f53" d="M123 404h3v3h-3z"/><path fill="#fe742f" d="M126 404h3v3h-3z"/><path fill="#fe6417" d="M129 404h3v3h-3z"/><path fill="#fe5d0b" d="M132 404h3v3h-3z"/><path fill="#fe5a05" d="M135 404h3v3h-3z"/><path fill="#fe5902" d="M138 404h3v3h-3z"/><path fill="#fe5601" d="M141 404h3v3h-3z"/><path fill="#fe5200" d="M144 404h3v3h-3z"/><path fill="#fe4c00" d="M147 404h3v3h-3z"/><path fill="#fe4600" d="M150 404h3v3h-3z"/><path fill="#fe3f00" d="M153 404h3v3h-3z"/><path fill="#fe3700" d="M156 404h3v3h-3z"/><path fill="#fe2e00" d="M159 404h3v3h-3z"/><path fill="#fe2500" d="M162 404h3v3h-3z"/><path fill="#00679c" d="M36 407h3v3h-3z"/><path fill="#00669d" d="M39 407h3v3h-3z"/><path fill="#0165a0" d="M42 407h3v3h-3z"/><path fill="#0162a3" d="M45 407h3v3h-3z"/><path fill="#0260a6" d="M48 407h3v3h-3z"/><path fill="#035fa8" d="M51 407h3v3h-3z"/><path fill="#035fa8" d="M54 407h3v3h-3z"/><path fill="#0362a6" d="M57 407h3v3h-3z"/><path fill="#0465a4" d="M60 407h3v3h-3z"/><path fill="#0568a2" d="M63 407h3v3h-3z"/><path fill="#0a6da2" d="M66 407h3v3h-3z"/><path fill="#1677a5" d="M69 407h3v3h-3z"/><path fill="#2e87ac" d="M72 407h3v3h-3z"/><path fill="#529db9" d="M75 407h3v3h-3z"/><path fill="#7bb4c7" d="M78 407h3v3h-3z"/><path fill="#9fc9d4" d="M81 407h3v3h-3z"/><path fill="#bddadd" d="M84 407h3v3h-3z"/><path fill="#d3e7e3" d="M87 407h3v3h-3z"/><path fill="#e2f0e5" d="M90 407h3v3h-3z"/><path fill="#ebf6e5" d="M93 407h3v3h-3z"/><path fill="#f0f9e4" d="M96 407h3v3h-3z"/><path fill="#f4f9e2" d="M99 407h3v3h-3z"/><path fill="#f6f9df" d="M102 407h3v3h-3z"/><path fill="#f8f7db" d="M105 407h3v3h-3z"/><path fill="#faf1d4" d="M108 407h3v3h-3z"/><path fill="#fbe6c9" d="M111 407h3v3h-3z"/><path fill="#fcd2b8" d="M114 407h3v3h-3z"/><path fill="#fdb7a1" d="M117 407h3v3h-3z"/><path fill="#fe9884" d="M120 407h3v3h-3z"/><path fill="#fe7963" d="M123 407h3v3h-3z"/><path fill="#fe5f41" d="M126 407h3v3h-3z"/><path fill="#fe5026" d="M129 407h3v3h-3z"/><path fill="#fe4c15" d="M132 407h3v3h-3z"/><path fill="#fe4d0b" d="M135 407h3v3h-3z"/><path fill="#fe4f06" d="M138 407h3v3h-3z"/><path fill="#fe4e03" d="M141 407h3v3h-3z"/><path fill="#fe4b01" d="M144 407h3v3h-3z"/><path fill="#fe4600" d="M147 407h3v3h-3z"/><path fill="#fe4000" d="M150 407h3v3h-3z"/><path fill="#fe3800" d="M153 407h3v3h-3z"/><path fill="#fe3000" d="M156 407h3v3h-3z"/><path fill="#fe2700" d="M159 407h3v3h-3z"/><path fill="#fe1e00" d="M162 407h3v3h-3z"/><path fill="#fe1700" d="M165 407h3v3h-3z"/><path fill="#0261a4" d="M39 410h3v3h-3z"/><path fill="#035ea9" d="M42 410h3v3h-3z"/><path fill="#0459ae" d="M45 410h3v3h-3z"/><path fill="#0555b3" d="M48 410h3v3h-3z"/><path fill="#0654b6" d="M51 410h3v3h-3z"/><path fill="#0754b7" d="M54 410h3v3h-3z"/><path fill="#0856b6" d="M57 410h3v3h-3z"/><path fill="#095ab4" d="M60 410h3v3h-3z"/><path fill="#0c5eb4" d="M63 410h3v3h-3z"/><path fill="#1565b7" d="M66 410h3v3h-3z"/><path fill="#2a74bd" d="M69 410h3v3h-3z"/><path fill="#508dc8" d="M72 410h3v3h-3z"/><path fill="#7fabd7" d="M75 410h3v3h-3z"/><path fill="#a7c4e3" d="M78 410h3v3h-3z"/><path fill="#c2d5ec" d="M81 410h3v3h-3z"/><path fill="#d5e1f0" d="M84 410h3v3h-3z"/><path fill="#e2eaf2" d="M87 410h3v3h-3z"/><path fill="#ebf1f2" d="M90 410h3v3h-3z"/><path fill="#f2f6f1" d="M93 410h3v3h-3z"/><path fill="#f6f8ef" d="M96 410h3v3h-3z"/><path fill="#f8f8ed" d="M99 410h3v3h-3z"/><path fill="#faf7ea" d="M102 410h3v3h-3z"/><path fill="#fbf4e4" d="M105 410h3v3h-3z"/><path fill="#fcebd9" d="M108 410h3v3h-3z"/><path fill="#fdd9c8" d="M111 410h3v3h-3z"/><path fill="#febfb2" d="M114 410h3v3h-3z"/><path fill="#fea29a" d="M117 410h3v3h-3z"/><path fill="#fe8680" d="M120 410h3v3h-3z"/><path fill="#fe6c66" d="M123 410h3v3h-3z"/><path fill="#fe544a" d="M126 410h3v3h-3z"/><path fill="#fe4431" d="M129 410h3v3h-3z"/><path fill="#fe3e1f" d="M132 410h3v3h-3z"/><path fill="#fe3f13" d="M135 410h3v3h-3z"/><path fill="#fe430a" d="M138 410h3v3h-3z"/><path fill="#fe4505" d="M141 410h3v3h-3z"/><path fill="#fe4402" d="M144 410h3v3h-3z"/><path fill="#fe4001" d="M147 410h3v3h-3z"/><path fill="#fe3900" d="M150 410h3v3h-3z"/><path fill="#fe3100" d="M153 410h3v3h-3z"/><path fill="#fe2900" d="M156 410h3v3h-3z"/><path fill="#fe2000" d="M159 410h3v3h-3z"/><path fill="#fe1900" d="M162 410h3v3h-3z"/><path fill="#fe1300" d="M165 410h3v3h-3z"/><path fill="#fe0d00" d="M168 410h3v3h-3z"/><path fill="#0458b0" d="M39 413h3v3h-3z"/><path fill="#0653b6" d="M42 413h3v3h-3z"/><path fill="#074fbc" d="M45 413h3v3h-3z"/><path fill="#084cbf" d="M48 413h3v3h-3z"/><path fill="#094cc1" d="M51 413h3v3h-3z"/><path fill="#0a4cc2" d="M54 413h3v3h-3z"/><path fill="#0b4ec3" d="M57 413h3v3h-3z"/><path fill="#0e51c4" d="M60 413h3v3h-3z"/><path fill="#1355c7" d="M63 413h3v3h-3z"/><path fill="#1e5ccb" d="M66 413h3v3h-3z"/><path fill="#366cd2" d="M69 413h3v3h-3z"/><path fill="#608adc" d="M72 413h3v3h-3z"/><path fill="#93ade8" d="M75 413h3v3h-3z"/><path fill="#b9c8f1" d="M78 413h3v3h-3z"/><path fill="#d0d8f6" d="M81 413h3v3h-3z"/><path fill="#dde1f8" d="M84 413h3v3h-3z"/><path fill="#e7e9f9" d="M87 413h3v3h-3z"/><path fill="#eeeff8" d="M90 413h3v3h-3z"/><path fill="#f4f3f7" d="M93 413h3v3h-3z"/><path fill="#f8f5f6" d="M96 413h3v3h-3z"/><path fill="#faf5f4" d="M99 413h3v3h-3z"/><path fill="#fcf4f0" d="M102 413h3v3h-3z"/><path fill="#fdeee8" d="M105 413h3v3h-3z"/><path fill="#fde1d9" d="M108 413h3v3h-3z"/><path fill="#fec9c1" d="M111 413h3v3h-3z"/><path fill="#feaba6" d="M114 413h3v3h-3z"/><path fill="#fe908e" d="M117 413h3v3h-3z"/><path fill="#fe7878" d="M120 413h3v3h-3z"/><path fill="#fe6261" d="M123 413h3v3h-3z"/><path fill="#fe4d4b" d="M126 413h3v3h-3z"/><path fill="#fe3d36" d="M129 413h3v3h-3z"/><path fill="#fe3426" d="M132 413h3v3h-3z"/><path fill="#fe341a" d="M135 413h3v3h-3z"/><path fill="#fe3811" d="M138 413h3v3h-3z"/><path fill="#fe3c09" d="M141 413h3v3h-3z"/><path fill="#fe3c04" d="M144 413h3v3h-3z"/><path fill="#fe3901" d="M147 413h3v3h-3z"/><path fill="#fe3200" d="M150 413h3v3h-3z"/><path fill="#fe2a00" d="M153 413h3v3h-3z"/><path fill="#fe2200" d="M156 413h3v3h-3z"/><path fill="#fe1b00" d="M159 413h3v3h-3z"/><path fill="#fe1500" d="M162 413h3v3h-3z"/><path fill="#fe0f00" d="M165 413h3v3h-3z"/><path fill="#fe0a00" d="M168 413h3v3h-3z"/><path fill="#fe0600" d="M171 413h3v3h-3z"/><path fill="#074ebc" d="M39 416h3v3h-3z"/><path fill="#084bc1" d="M42 416h3v3h-3z"/><path fill="#0949c3" d="M45 416h3v3h-3z"/><path fill="#0948c5" d="M48 416h3v3h-3z"/><path fill="#0a48c6" d="M51 416h3v3h-3z"/><path fill="#0b49c8" d="M54 416h3v3h-3z"/><path fill="#0e4ac9" d="M57 416h3v3h-3z"/><path fill="#114ccc" d="M60 416h3v3h-3z"/><path fill="#1750d0" d="M63 416h3v3h-3z"/><path fill="#2156d5" d="M66 416h3v3h-3z"/><path fill="#3464da" d="M69 416h3v3h-3z"/><path fill="#5a7fe3" d="M72 416h3v3h-3z"/><path fill="#8da4ed" d="M75 416h3v3h-3z"/><path fill="#b8c3f5" d="M78 416h3v3h-3z"/><path fill="#d1d5fa" d="M81 416h3v3h-3z"/><path fill="#dedefb" d="M84 416h3v3h-3z"/><path fill="#e7e5fb" d="M87 416h3v3h-3z"/><path fill="#efeafb" d="M90 416h3v3h-3z"/><path fill="#f5edfa" d="M93 416h3v3h-3z"/><path fill="#f9eff9" d="M96 416h3v3h-3z"/><path fill="#fbeef7" d="M99 416h3v3h-3z"/><path fill="#fdecf3" d="M102 416h3v3h-3z"/><path fill="#fde5e9" d="M105 416h3v3h-3z"/><path fill="#fed3d5" d="M108 416h3v3h-3z"/><path fill="#feb6b7" d="M111 416h3v3h-3z"/><path fill="#fe9899" d="M114 416h3v3h-3z"/><path fill="#fe7f81" d="M117 416h3v3h-3z"/><path fill="#fe6b6e" d="M120 416h3v3h-3z"/><path fill="#fe585b" d="M123 416h3v3h-3z"/><path fill="#fe4748" d="M126 416h3v3h-3z"/><path fill="#fe3837" d="M129 416h3v3h-3z"/><path fill="#fe2f2a" d="M132 416h3v3h-3z"/><path fill="#fe2c1f" d="M135 416h3v3h-3z"/><path fill="#fe2e16" d="M138 416h3v3h-3z"/><path fill="#fe330e" d="M141 416h3v3h-3z"/><path fill="#fe3506" d="M144 416h3v3h-3z"/><path fill="#fe3202" d="M147 416h3v3h-3z"/><path fill="#fe2b00" d="M150 416h3v3h-3z"/><path fill="#fe2400" d="M153 416h3v3h-3z"/><path fill="#fe1d00" d="M156 416h3v3h-3z"/><path fill="#fe1700" d="M159 416h3v3h-3z"/><path fill="#fe1100" d="M162 416h3v3h-3z"/><path fill="#fe0d00" d="M165 416h3v3h-3z"/><path fill="#fe0800" d="M168 416h3v3h-3z"/><path fill="#fe0400" d="M171 416h3v3h-3z"/><path fill="#fe0200" d="M174 416h3v3h-3z"/><path fill="#0948c4" d="M39 419h3v3h-3z"/><path fill="#0947c6" d="M42 419h3v3h-3z"/><path fill="#0a47c7" d="M45 419h3v3h-3z"/><path fill="#0a46c7" d="M48 419h3v3h-3z"/><path fill="#0b47c8" d="M51 419h3v3h-3z"/><path fill="#0c47ca" d="M54 419h3v3h-3z"/><path fill="#0f49cc" d="M57 419h3v3h-3z"/><path fill="#134bd0" d="M60 419h3v3h-3z"/><path fill="#184ed4" d="M63 419h3v3h-3z"/><path fill="#2053d8" d="M66 419h3v3h-3z"/><path fill="#2f5ddc" d="M69 419h3v3h-3z"/><path fill="#4d73e3" d="M72 419h3v3h-3z"/><path fill="#7d96ec" d="M75 419h3v3h-3z"/><path fill="#adb8f5" d="M78 419h3v3h-3z"/><path fill="#cccefa" d="M81 419h3v3h-3z"/><path fill="#ddd9fc" d="M84 419h3v3h-3z"/><path fill="#e7dffc" d="M87 419h3v3h-3z"/><path fill="#efe2fb" d="M90 419h3v3h-3z"/><path fill="#f6e5fa" d="M93 419h3v3h-3z"/><path fill="#fae5fa" d="M96 419h3v3h-3z"/><path fill="#fce4f8" d="M99 419h3v3h-3z"/><path fill="#fde1f4" d="M102 419h3v3h-3z"/><path fill="#fed7e9" d="M105 419h3v3h-3z"/><path fill="#fec2d1" d="M108 419h3v3h-3z"/><path fill="#fea2ad" d="M111 419h3v3h-3z"/><path fill="#fe858c" d="M114 419h3v3h-3z"/><path fill="#fe6f75" d="M117 419h3v3h-3z"/><path fill="#fe5e63" d="M120 419h3v3h-3z"/><path fill="#fe4e53" d="M123 419h3v3h-3z"/><path fill="#fe4044" d="M126 419h3v3h-3z"/><path fill="#fe3436" d="M129 419h3v3h-3z"/><path fill="#fe2c2b" d="M132 419h3v3h-3z"/><path fill="#fe2823" d="M135 419h3v3h-3z"/><path fill="#fe281b" d="M138 419h3v3h-3z"/><path fill="#fe2b12" d="M141 419h3v3h-3z"/><path fill="#fe2d0a" d="M144 419h3v3h-3z"/><path fill="#fe2a04" d="M147 419h3v3h-3z"/><path fill="#fe2401" d="M150 419h3v3h-3z"/><path fill="#fe1e00" d="M153 419h3v3h-3z"/><path fill="#fe1800" d="M156 419h3v3h-3z"/><path fill="#fe1300" d="M159 419h3v3h-3z"/><path fill="#fe0f00" d="M162 419h3v3h-3z"/><path fill="#fe0a00" d="M165 419h3v3h-3z"/><path fill="#fe0600" d="M168 419h3v3h-3z"/><path fill="#fe0300" d="M171 419h3v3h-3z"/><path fill="#fe0100" d="M174 419h3v3h-3z"/><path fill="#fe0000" d="M177 419h3v3h-3z"/><path fill="#0a46c7" d="M39 422h3v3h-3z"/><path fill="#0a45c8" d="M42 422h3v3h-3z"/><path fill="#0a45c8" d="M45 422h3v3h-3z"/><path fill="#0b45c9" d="M48 422h3v3h-3z"/><path fill="#0b46ca" d="M51 422h3v3h-3z"/><path fill="#0d47cc" d="M54 422h3v3h-3z"/><path fill="#1048cf" d="M57 422h3v3h-3z"/><path fill="#144bd2" d="M60 422h3v3h-3z"/><path fill="#194ed6" d="M63 422h3v3h-3z"/><path fill="#1f51d9" d="M66 422h3v3h-3z"/><path fill="#2a59dc" d="M69 422h3v3h-3z"/><path fill="#4069e1" d="M72 422h3v3h-3z"/><path fill="#6b86e9" d="M75 422h3v3h-3z"/><path fill="#9eaaf2" d="M78 422h3v3h-3z"/><path fill="#c6c3f8" d="M81 422h3v3h-3z"/><path fill="#dccefa" d="M84 422h3v3h-3z"/><path fill="#e8d4fb" d="M87 422h3v3h-3z"/><path fill="#f1d7fa" d="M90 422h3v3h-3z"/><path fill="#f7d9fa" d="M93 422h3v3h-3z"/><path fill="#fbd9f9" d="M96 422h3v3h-3z"/><path fill="#fdd7f7" d="M99 422h3v3h-3z"/><path fill="#fed2f2" d="M102 422h3v3h-3z"/><path fill="#fec5e5" d="M105 422h3v3h-3z"/><path fill="#feaccc" d="M108 422h3v3h-3z"/><path fill="#fe8ca6" d="M111 422h3v3h-3z"/><path fill="#fe7183" d="M114 422h3v3h-3z"/><path fill="#fe5e6a" d="M117 422h3v3h-3z"/><path fill="#fe5059" d="M120 422h3v3h-3z"/><path fill="#fe444b" d="M123 422h3v3h-3z"/><path fill="#fe393e" d="M126 422h3v3h-3z"/><path fill="#fe2f34" d="M129 422h3v3h-3z"/><path fill="#fe292c" d="M132 422h3v3h-3z"/><path fill="#fe2525" d="M135 422h3v3h-3z"/><path fill="#fe231f" d="M138 422h3v3h-3z"/><path fill="#fe2417" d="M141 422h3v3h-3z"/><path fill="#fe240f" d="M144 422h3v3h-3z"/><path fill="#fe2108" d="M147 422h3v3h-3z"/><path fill="#fe1d05" d="M150 422h3v3h-3z"/><path fill="#fe1802" d="M153 422h3v3h-3z"/><path fill="#fe1401" d="M156 422h3v3h-3z"/><path fill="#fe1000" d="M159 422h3v3h-3z"/><path fill="#fe0c00" d="M162 422h3v3h-3z"/><path fill="#fe0800" d="M165 422h3v3h-3z"/><path fill="#fe0400" d="M168 422h3v3h-3z"/><path fill="#fe0200" d="M171 422h3v3h-3z"/><path fill="#fe0100" d="M174 422h3v3h-3z"/><path fill="#fe0000" d="M177 422h3v3h-3z"/><path fill="#0a42cb" d="M39 425h3v3h-3z"/><path fill="#0b42cb" d="M42 425h3v3h-3z"/><path fill="#0b42cb" d="M45 425h3v3h-3z"/><path fill="#0b43cc" d="M48 425h3v3h-3z"/><path fill="#0c44cd" d="M51 425h3v3h-3z"/><path fill="#0e45ce" d="M54 425h3v3h-3z"/><path fill="#1247d1" d="M57 425h3v3h-3z"/><path fill="#154ad4" d="M60 425h3v3h-3z"/><path fill="#1a4dd7" d="M63 425h3v3h-3z"/><path fill="#1e50da" d="M66 425h3v3h-3z"/><path fill="#2655dc" d="M69 425h3v3h-3z"/><path fill="#3861e0" d="M72 425h3v3h-3z"/><path fill="#5d77e6" d="M75 425h3v3h-3z"/><path fill="#9396ee" d="M78 425h3v3h-3z"/><path fill="#c2adf4" d="M81 425h3v3h-3z"/><path fill="#deb7f7" d="M84 425h3v3h-3z"/><path fill="#ecbcf7" d="M87 425h3v3h-3z"/><path fill="#f4c1f7" d="M90 425h3v3h-3z"/><path fill="#f9c6f7" d="M93 425h3v3h-3z"/><path fill="#fcc9f6" d="M96 425h3v3h-3z"/><path fill="#fdc7f3" d="M99 425h3v3h-3z"/><path fill="#febeec" d="M102 425h3v3h-3z"/><path fill="#feacdf" d="M105 425h3v3h-3z"/><path fill="#fe91c7" d="M108 425h3v3h-3z"/><path fill="#fe74a4" d="M111 425h3v3h-3z"/><path fill="#fe5e81" d="M114 425h3v3h-3z"/><path fill="#fe4f66" d="M117 425h3v3h-3z"/><path fill="#fe4352" d="M120 425h3v3h-3z"/><path fill="#fe3a45" d="M123 425h3v3h-3z"/><path fill="#fe323a" d="M126 425h3v3h-3z"/><path fill="#fe2b32" d="M129 425h3v3h-3z"/><path fill="#fe262c" d="M132 425h3v3h-3z"/><path fill="#fe2226" d="M135 425h3v3h-3z"/><path fill="#fe1e22" d="M138 425h3v3h-3z"/><path fill="#fe1a1d" d="M141 425h3v3h-3z"/><path fill="#fe1618" d="M144 425h3v3h-3z"/><path fill="#fe1313" d="M147 425h3v3h-3z"/><path fill="#fe120d" d="M150 425h3v3h-3z"/><path fill="#fe1109" d="M153 425h3v3h-3z"/><path fill="#fe1005" d="M156 425h3v3h-3z"/><path fill="#fe0d02" d="M159 425h3v3h-3z"/><path fill="#fe0901" d="M162 425h3v3h-3z"/><path fill="#fe0600" d="M165 425h3v3h-3z"/><path fill="#fe0300" d="M168 425h3v3h-3z"/><path fill="#fe0100" d="M171 425h3v3h-3z"/><path fill="#fe0000" d="M174 425h3v3h-3z"/><path fill="#fe0000" d="M177 425h3v3h-3z"/><path fill="#0c3bd3" d="M42 428h3v3h-3z"/><path fill="#0d3bd3" d="M45 428h3v3h-3z"/><path fill="#0d3bd3" d="M48 428h3v3h-3z"/><path fill="#0e3dd4" d="M51 428h3v3h-3z"/><path fill="#103fd5" d="M54 428h3v3h-3z"/><path fill="#1342d6" d="M57 428h3v3h-3z"/><path fill="#1646d8" d="M60 428h3v3h-3z"/><path fill="#1a4bd9" d="M63 428h3v3h-3z"/><path fill="#1e4edb" d="M66 428h3v3h-3z"/><path fill="#2452dc" d="M69 428h3v3h-3z"/><path fill="#355adf" d="M72 428h3v3h-3z"/><path fill="#5a69e3" d="M75 428h3v3h-3z"/><path fill="#957cea" d="M78 428h3v3h-3z"/><path fill="#cb88ef" d="M81 428h3v3h-3z"/><path fill="#e78df1" d="M84 428h3v3h-3z"/><path fill="#f392f1" d="M87 428h3v3h-3z"/><path fill="#f99cf2" d="M90 428h3v3h-3z"/><path fill="#fca8f2" d="M93 428h3v3h-3z"/><path fill="#fdaff1" d="M96 428h3v3h-3z"/><path fill="#feaeed" d="M99 428h3v3h-3z"/><path fill="#fea3e4" d="M102 428h3v3h-3z"/><path fill="#fe8dd5" d="M105 428h3v3h-3z"/><path fill="#fe74c1" d="M108 428h3v3h-3z"/><path fill="#fe5da7" d="M111 428h3v3h-3z"/><path fill="#fe4d88" d="M114 428h3v3h-3z"/><path fill="#fe416b" d="M117 428h3v3h-3z"/><path fill="#fe3853" d="M120 428h3v3h-3z"/><path fill="#fe3143" d="M123 428h3v3h-3z"/><path fill="#fe2b39" d="M126 428h3v3h-3z"/><path fill="#fe2632" d="M129 428h3v3h-3z"/><path fill="#fe222d" d="M132 428h3v3h-3z"/><path fill="#fe1d29" d="M135 428h3v3h-3z"/><path fill="#fe1625" d="M138 428h3v3h-3z"/><path fill="#fe0e23" d="M141 428h3v3h-3z"/><path fill="#fe0921" d="M144 428h3v3h-3z"/><path fill="#fe071f" d="M147 428h3v3h-3z"/><path fill="#fe081a" d="M150 428h3v3h-3z"/><path fill="#fe0914" d="M153 428h3v3h-3z"/><path fill="#fe0a0d" d="M156 428h3v3h-3z"/><path fill="#fe0907" d="M159 428h3v3h-3z"/><path fill="#fe0703" d="M162 428h3v3h-3z"/><path fill="#fe0401" d="M165 428h3v3h-3z"/><path fill="#fe0200" d="M168 428h3v3h-3z"/><path fill="#fe0100" d="M171 428h3v3h-3z"/><path fill="#fe0000" d="M174 428h3v3h-3z"/><path fill="#fe0000" d="M177 428h3v3h-3z"/><path fill="#102de0" d="M42 431h3v3h-3z"/><path fill="#102de0" d="M45 431h3v3h-3z"/><path fill="#102ee0" d="M48 431h3v3h-3z"/><path fill="#1130e0" d="M51 431h3v3h-3z"/><path fill="#1232df" d="M54 431h3v3h-3z"/><path fill="#1437df" d="M57 431h3v3h-3z"/><path fill="#163dde" d="M60 431h3v3h-3z"/><path fill="#1a44dd" d="M63 431h3v3h-3z"/><path fill="#1e4add" d="M66 431h3v3h-3z"/><path fill="#264edd" d="M69 431h3v3h-3z"/><path fill="#3a53df" d="M72 431h3v3h-3z"/><path fill="#6b5ae2" d="M75 431h3v3h-3z"/><path fill="#ae5fe7" d="M78 431h3v3h-3z"/><path fill="#de60ea" d="M81 431h3v3h-3z"/><path fill="#f261eb" d="M84 431h3v3h-3z"/><path fill="#f966eb" d="M87 431h3v3h-3z"/><path fill="#fc71ec" d="M90 431h3v3h-3z"/><path fill="#fd7fec" d="M93 431h3v3h-3z"/><path fill="#fe8bea" d="M96 431h3v3h-3z"/><path fill="#fe8de4" d="M99 431h3v3h-3z"/><path fill="#fe82d9" d="M102 431h3v3h-3z"/><path fill="#fe6fcb" d="M105 431h3v3h-3z"/><path fill="#fe5bbc" d="M108 431h3v3h-3z"/><path fill="#fe4cab" d="M111 431h3v3h-3z"/><path fill="#fe4195" d="M114 431h3v3h-3z"/><path fill="#fe3879" d="M117 431h3v3h-3z"/><path fill="#fe305e" d="M120 431h3v3h-3z"/><path fill="#fe284a" d="M123 431h3v3h-3z"/><path fill="#fe233e" d="M126 431h3v3h-3z"/><path fill="#fe1f37" d="M129 431h3v3h-3z"/><path fill="#fe1b32" d="M132 431h3v3h-3z"/><path fill="#fe152e" d="M135 431h3v3h-3z"/><path fill="#fe0c2a" d="M138 431h3v3h-3z"/><path fill="#fe0527" d="M141 431h3v3h-3z"/><path fill="#fe0226" d="M144 431h3v3h-3z"/><path fill="#fe0225" d="M147 431h3v3h-3z"/><path fill="#fe0223" d="M150 431h3v3h-3z"/><path fill="#fe0320" d="M153 431h3v3h-3z"/><path fill="#fe041a" d="M156 431h3v3h-3z"/><path fill="#fe0511" d="M159 431h3v3h-3z"/><path fill="#fe0508" d="M162 431h3v3h-3z"/><path fill="#fe0303" d="M165 431h3v3h-3z"/><path fill="#fe0100" d="M168 431h3v3h-3z"/><path fill="#fe0000" d="M171 431h3v3h-3z"/><path fill="#fe0000" d="M174 431h3v3h-3z"/><path fill="#1223ea" d="M42 434h3v3h-3z"/><path fill="#1223ea" d="M45 434h3v3h-3z"/><path fill="#1224ea" d="M48 434h3v3h-3z"/><path fill="#1324ea" d="M51 434h3v3h-3z"/><path fill="#1326e9" d="M54 434h3v3h-3z"/><path fill="#142ae8" d="M57 434h3v3h-3z"/><path fill="#162fe6" d="M60 434h3v3h-3z"/><path fill="#1937e4" d="M63 434h3v3h-3z"/><path fill="#1f40e1" d="M66 434h3v3h-3z"/><path fill="#2d46e0" d="M69 434h3v3h-3z"/><path fill="#5049e1" d="M72 434h3v3h-3z"/><path fill="#9149e4" d="M75 434h3v3h-3z"/><path fill="#d048e6" d="M78 434h3v3h-3z"/><path fill="#ef47e7" d="M81 434h3v3h-3z"/><path fill="#f948e7" d="M84 434h3v3h-3z"/><path fill="#fc4ae8" d="M87 434h3v3h-3z"/><path fill="#fe51e8" d="M90 434h3v3h-3z"/><path fill="#fe5ae7" d="M93 434h3v3h-3z"/><path fill="#fe63e4" d="M96 434h3v3h-3z"/><path fill="#fe66dc" d="M99 434h3v3h-3z"/><path fill="#fe60d0" d="M102 434h3v3h-3z"/><path fill="#fe55c4" d="M105 434h3v3h-3z"/><path fill="#fe4ab9" d="M108 434h3v3h-3z"/><path fill="#fe42ae" d="M111 434h3v3h-3z"/><path fill="#fe3a9e" d="M114 434h3v3h-3z"/><path fill="#fe3187" d="M117 434h3v3h-3z"/><path fill="#fe276d" d="M120 434h3v3h-3z"/><path fill="#fe1e57" d="M123 434h3v3h-3z"/><path fill="#fe184a" d="M126 434h3v3h-3z"/><path fill="#fe1343" d="M129 434h3v3h-3z"/><path fill="#fe103e" d="M132 434h3v3h-3z"/><path fill="#fe0a37" d="M135 434h3v3h-3z"/><path fill="#fe052e" d="M138 434h3v3h-3z"/><path fill="#fe0129" d="M141 434h3v3h-3z"/><path fill="#fe0028" d="M144 434h3v3h-3z"/><path fill="#fe0027" d="M147 434h3v3h-3z"/><path fill="#fe0026" d="M150 434h3v3h-3z"/><path fill="#fe0125" d="M153 434h3v3h-3z"/><path fill="#fe0122" d="M156 434h3v3h-3z"/><path fill="#fe021c" d="M159 434h3v3h-3z"/><path fill="#fe0211" d="M162 434h3v3h-3z"/><path fill="#fe0207" d="M165 434h3v3h-3z"/><path fill="#fe0102" d="M168 434h3v3h-3z"/><path fill="#131fee" d="M42 437h3v3h-3z"/><path fill="#131fee" d="M45 437h3v3h-3z"/><path fill="#131fee" d="M48 437h3v3h-3z"/><path fill="#1320ee" d="M51 437h3v3h-3z"/><path fill="#1420ee" d="M54 437h3v3h-3z"/><path fill="#1422ed" d="M57 437h3v3h-3z"/><path fill="#1624ec" d="M60 437h3v3h-3z"/><path fill="#1a29ea" d="M63 437h3v3h-3z"/><path fill="#252fe8" d="M66 437h3v3h-3z"/><path fill="#3f34e7" d="M69 437h3v3h-3z"/><path fill="#7336e8" d="M72 437h3v3h-3z"/><path fill="#b538e8" d="M75 437h3v3h-3z"/><path fill="#e23ae8" d="M78 437h3v3h-3z"/><path fill="#f43be7" d="M81 437h3v3h-3z"/><path fill="#fb3ce6" d="M84 437h3v3h-3z"/><path fill="#fd3ce6" d="M87 437h3v3h-3z"/><path fill="#fe3de6" d="M90 437h3v3h-3z"/><path fill="#fe3fe5" d="M93 437h3v3h-3z"/><path fill="#fe42e1" d="M96 437h3v3h-3z"/><path fill="#fe44d9" d="M99 437h3v3h-3z"/><path fill="#fe45cd" d="M102 437h3v3h-3z"/><path fill="#fe42c1" d="M105 437h3v3h-3z"/><path fill="#fe3fb8" d="M108 437h3v3h-3z"/><path fill="#fe3baf" d="M111 437h3v3h-3z"/><path fill="#fe34a1" d="M114 437h3v3h-3z"/><path fill="#fe2a8d" d="M117 437h3v3h-3z"/><path fill="#fe1e75" d="M120 437h3v3h-3z"/><path fill="#fe1362" d="M123 437h3v3h-3z"/><path fill="#fe0c56" d="M126 437h3v3h-3z"/><path fill="#fe0951" d="M129 437h3v3h-3z"/><path fill="#fe064b" d="M132 437h3v3h-3z"/><path fill="#fe0440" d="M135 437h3v3h-3z"/><path fill="#fe0133" d="M138 437h3v3h-3z"/><path fill="#fe002b" d="M141 437h3v3h-3z"/><path fill="#fe0028" d="M144 437h3v3h-3z"/><path fill="#fe0028" d="M147 437h3v3h-3z"/><path fill="#fe0027" d="M150 437h3v3h-3z"/><path fill="#fe0027" d="M153 437h3v3h-3z"/><path fill="#fe0026" d="M156 437h3v3h-3z"/><path fill="#fe0023" d="M159 437h3v3h-3z"/><path fill="#fe011b" d="M162 437h3v3h-3z"/><path fill="#131eef" d="M45 440h3v3h-3z"/><path fill="#131eef" d="M48 440h3v3h-3z"/><path fill="#141eef" d="M51 440h3v3h-3z"/><path fill="#141eef" d="M54 440h3v3h-3z"/><path fill="#151fef" d="M57 440h3v3h-3z"/><path fill="#171fef" d="M60 440h3v3h-3z"/><path fill="#1f20ef" d="M63 440h3v3h-3z"/><path fill="#321fef" d="M66 440h3v3h-3z"/><path fill="#581df1" d="M69 440h3v3h-3z"/><path fill="#8b1ef1" d="M72 440h3v3h-3z"/><path fill="#bc25ef" d="M75 440h3v3h-3z"/><path fill="#df2eeb" d="M78 440h3v3h-3z"/><path fill="#f133e8" d="M81 440h3v3h-3z"/><path fill="#f934e7" d="M84 440h3v3h-3z"/><path fill="#fd33e6" d="M87 440h3v3h-3z"/><path fill="#fe31e5" d="M90 440h3v3h-3z"/><path fill="#fe2de4" d="M93 440h3v3h-3z"/><path fill="#fe2be1" d="M96 440h3v3h-3z"/><path fill="#fe2bda" d="M99 440h3v3h-3z"/><path fill="#fe2fd0" d="M102 440h3v3h-3z"/><path fill="#fe33c4" d="M105 440h3v3h-3z"/><path fill="#fe36b9" d="M108 440h3v3h-3z"/><path fill="#fe34ae" d="M111 440h3v3h-3z"/><path fill="#fe2e9e" d="M114 440h3v3h-3z"/><path fill="#fe2289" d="M117 440h3v3h-3z"/><path fill="#fe1472" d="M120 440h3v3h-3z"/><path fill="#fe0b63" d="M123 440h3v3h-3z"/><path fill="#fe055b" d="M126 440h3v3h-3z"/><path fill="#fe0357" d="M129 440h3v3h-3z"/><path fill="#fe0252" d="M132 440h3v3h-3z"/><path fill="#fe0147" d="M135 440h3v3h-3z"/><path fill="#fe0037" d="M138 440h3v3h-3z"/><path fill="#fe002d" d="M141 440h3v3h-3z"/><path fill="#fe0029" d="M144 440h3v3h-3z"/><path fill="#fe0028" d="M147 440h3v3h-3z"/><path fill="#fe0027" d="M150 440h3v3h-3z"/><path fill="#fe0027" d="M153 440h3v3h-3z"/><path fill="#131eef" d="M45 443h3v3h-3z"/><path fill="#141eef" d="M48 443h3v3h-3z"/><path fill="#141eef" d="M51 443h3v3h-3z"/><path fill="#141eef" d="M54 443h3v3h-3z"/><path fill="#161df0" d="M57 443h3v3h-3z"/><path fill="#1b1cf0" d="M60 443h3v3h-3z"/><path fill="#291af2" d="M63 443h3v3h-3z"/><path fill="#4714f5" d="M66 443h3v3h-3z"/><path fill="#6e0ef8" d="M69 443h3v3h-3z"/><path fill="#8f0df8" d="M72 443h3v3h-3z"/><path fill="#ad14f5" d="M75 443h3v3h-3z"/><path fill="#cc20f0" d="M78 443h3v3h-3z"/><path fill="#e529eb" d="M81 443h3v3h-3z"/><path fill="#f42ce8" d="M84 443h3v3h-3z"/><path fill="#fa2be6" d="M87 443h3v3h-3z"/><path fill="#fd26e6" d="M90 443h3v3h-3z"/><path fill="#fe20e5" d="M93 443h3v3h-3z"/><path fill="#fe1ce2" d="M96 443h3v3h-3z"/><path fill="#fe1ade" d="M99 443h3v3h-3z"/><path fill="#fe1ed6" d="M102 443h3v3h-3z"/><path fill="#fe25ca" d="M105 443h3v3h-3z"/><path fill="#fe2cbc" d="M108 443h3v3h-3z"/><path fill="#fe2dac" d="M111 443h3v3h-3z"/><path fill="#fe2597" d="M114 443h3v3h-3z"/><path fill="#fe187f" d="M117 443h3v3h-3z"/><path fill="#fe0d6b" d="M120 443h3v3h-3z"/><path fill="#fe0660" d="M123 443h3v3h-3z"/><path fill="#fe025b" d="M126 443h3v3h-3z"/><path fill="#fe0159" d="M129 443h3v3h-3z"/><path fill="#fe0055" d="M132 443h3v3h-3z"/><path fill="#fe004d" d="M135 443h3v3h-3z"/><path fill="#fe003c" d="M138 443h3v3h-3z"/><path fill="#fe002f" d="M141 443h3v3h-3z"/><path fill="#fe002a" d="M144 443h3v3h-3z"/><path fill="#fe0028" d="M147 443h3v3h-3z"/><path fill="#141eef" d="M45 446h3v3h-3z"/><path fill="#141def" d="M48 446h3v3h-3z"/><path fill="#141df0" d="M51 446h3v3h-3z"/><path fill="#151df0" d="M54 446h3v3h-3z"/><path fill="#181cf0" d="M57 446h3v3h-3z"/><path fill="#231af1" d="M60 446h3v3h-3z"/><path fill="#3b14f4" d="M63 446h3v3h-3z"/><path fill="#5f0cf8" d="M66 446h3v3h-3z"/><path fill="#7c06fb" d="M69 446h3v3h-3z"/><path fill="#8d05fc" d="M72 446h3v3h-3z"/><path fill="#9d09fa" d="M75 446h3v3h-3z"/><path fill="#b312f6" d="M78 446h3v3h-3z"/><path fill="#d01cf0" d="M81 446h3v3h-3z"/><path fill="#e822ea" d="M84 446h3v3h-3z"/><path fill="#f621e7" d="M87 446h3v3h-3z"/><path fill="#fc1ce6" d="M90 446h3v3h-3z"/><path fill="#fe16e5" d="M93 446h3v3h-3z"/><path fill="#fe11e4" d="M96 446h3v3h-3z"/><path fill="#fe0fe1" d="M99 446h3v3h-3z"/><path fill="#fe11dc" d="M102 446h3v3h-3z"/><path fill="#fe18d2" d="M105 446h3v3h-3z"/><path fill="#fe20c2" d="M108 446h3v3h-3z"/><path fill="#fe23ab" d="M111 446h3v3h-3z"/><path fill="#fe1c8e" d="M114 446h3v3h-3z"/><path fill="#fe1074" d="M117 446h3v3h-3z"/><path fill="#fe0765" d="M120 446h3v3h-3z"/><path fill="#fe035e" d="M123 446h3v3h-3z"/><path fill="#fe015b" d="M126 446h3v3h-3z"/><path fill="#fe0059" d="M129 446h3v3h-3z"/><path fill="#fe0057" d="M132 446h3v3h-3z"/><path fill="#fe0050" d="M135 446h3v3h-3z"/><path fill="#fe0042" d="M138 446h3v3h-3z"/><path fill="#fe0032" d="M141 446h3v3h-3z"/><path fill="#141df0" d="M48 449h3v3h-3z"/><path fill="#151df0" d="M51 449h3v3h-3z"/><path fill="#171df0" d="M54 449h3v3h-3z"/><path fill="#1e1bf1" d="M57 449h3v3h-3z"/><path fill="#3116f3" d="M60 449h3v3h-3z"/><path fill="#520ef7" d="M63 449h3v3h-3z"/><path fill="#7106fb" d="M66 449h3v3h-3z"/><path fill="#8302fd" d="M69 449h3v3h-3z"/><path fill="#8b02fd" d="M72 449h3v3h-3z"/><path fill="#9304fd" d="M75 449h3v3h-3z"/><path fill="#a008fa" d="M78 449h3v3h-3z"/><path fill="#b810f5" d="M81 449h3v3h-3z"/><path fill="#d716ee" d="M84 449h3v3h-3z"/><path fill="#ef17e9" d="M87 449h3v3h-3z"/><path fill="#f913e6" d="M90 449h3v3h-3z"/><path fill="#fd0ee5" d="M93 449h3v3h-3z"/><path fill="#fe0ae5" d="M96 449h3v3h-3z"/><path fill="#fe08e3" d="M99 449h3v3h-3z"/><path fill="#fe09e0" d="M102 449h3v3h-3z"/><path fill="#fe0ed9" d="M105 449h3v3h-3z"/><path fill="#fe15c9" d="M108 449h3v3h-3z"/><path fill="#fe18aa" d="M111 449h3v3h-3z"/><path fill="#fe1385" d="M114 449h3v3h-3z"/><path fill="#fe0a6c" d="M117 449h3v3h-3z"/><path fill="#fe0461" d="M120 449h3v3h-3z"/><path fill="#fe015c" d="M123 449h3v3h-3z"/><path fill="#fe005a" d="M126 449h3v3h-3z"/><path fill="#fe0059" d="M129 449h3v3h-3z"/><path fill="#fe0058" d="M132 449h3v3h-3z"/><path fill="#fe0053" d="M135 449h3v3h-3z"/><path fill="#151df0" d="M48 452h3v3h-3z"/><path fill="#171cf0" d="M51 452h3v3h-3z"/><path fill="#1d1bf1" d="M54 452h3v3h-3z"/><path fill="#2b17f3" d="M57 452h3v3h-3z"/><path fill="#470ff7" d="M60 452h3v3h-3z"/><path fill="#6607fb" d="M63 452h3v3h-3z"/><path fill="#7b03fd" d="M66 452h3v3h-3z"/><path fill="#8501fe" d="M69 452h3v3h-3z"/><path fill="#8900fe" d="M72 452h3v3h-3z"/><path fill="#8d01fe" d="M75 452h3v3h-3z"/><path fill="#9503fc" d="M78 452h3v3h-3z"/><path fill="#a607f9" d="M81 452h3v3h-3z"/><path fill="#c50cf2" d="M84 452h3v3h-3z"/><path fill="#e40eeb" d="M87 452h3v3h-3z"/><path fill="#f60be7" d="M90 452h3v3h-3z"/><path fill="#fc08e6" d="M93 452h3v3h-3z"/><path fill="#fe05e5" d="M96 452h3v3h-3z"/><path fill="#fe04e4" d="M99 452h3v3h-3z"/><path fill="#fe05e3" d="M102 452h3v3h-3z"/><path fill="#fe07de" d="M105 452h3v3h-3z"/><path fill="#fe0cd0" d="M108 452h3v3h-3z"/><path fill="#fe0fad" d="M111 452h3v3h-3z"/><path fill="#fe0b80" d="M114 452h3v3h-3z"/><path fill="#fe0567" d="M117 452h3v3h-3z"/><path fill="#fe025e" d="M120 452h3v3h-3z"/><path fill="#fe005b" d="M123 452h3v3h-3z"/><path fill="#fe005a" d="M126 452h3v3h-3z"/><path fill="#fe0059" d="M129 452h3v3h-3z"/><path fill="#181cf0" d="M48 455h3v3h-3z"/><path fill="#1d1af1" d="M51 455h3v3h-3z"/><path fill="#2a16f3" d="M54 455h3v3h-3z"/><path fill="#410ff7" d="M57 455h3v3h-3z"/><path fill="#5b08fa" d="M60 455h3v3h-3z"/><path fill="#7003fd" d="M63 455h3v3h-3z"/><path fill="#7c01fe" d="M66 455h3v3h-3z"/><path fill="#8300fe" d="M69 455h3v3h-3z"/><path fill="#8600fe" d="M72 455h3v3h-3z"/><path fill="#8a00fe" d="M75 455h3v3h-3z"/><path fill="#8e01fd" d="M78 455h3v3h-3z"/><path fill="#9a03fb" d="M81 455h3v3h-3z"/><path fill="#b405f6" d="M84 455h3v3h-3z"/><path fill="#d807ee" d="M87 455h3v3h-3z"/><path fill="#f106e8" d="M90 455h3v3h-3z"/><path fill="#fb04e6" d="M93 455h3v3h-3z"/><path fill="#fe03e5" d="M96 455h3v3h-3z"/><path fill="#fe02e5" d="M99 455h3v3h-3z"/><path fill="#fe02e4" d="M102 455h3v3h-3z"/><path fill="#fe03e1" d="M105 455h3v3h-3z"/><path fill="#fe06d5" d="M108 455h3v3h-3z"/><path fill="#fe08b1" d="M111 455h3v3h-3z"/><path fill="#fe067f" d="M114 455h3v3h-3z"/><path fill="#fe0364" d="M117 455h3v3h-3z"/><path fill="#fe015d" d="M120 455h3v3h-3z"/><path fill="#fe005a" d="M123 455h3v3h-3z"/><path fill="#3013f5" d="M51 458h3v3h-3z"/><path fill="#420cf8" d="M54 458h3v3h-3z"/><path fill="#5506fb" d="M57 458h3v3h-3z"/><path fill="#6403fd" d="M60 458h3v3h-3z"/><path fill="#6f01fe" d="M63 458h3v3h-3z"/><path fill="#7600fe" d="M66 458h3v3h-3z"/><path fill="#7c00fe" d="M69 458h3v3h-3z"/><path fill="#8100fe" d="M72 458h3v3h-3z"/><path fill="#8500fe" d="M75 458h3v3h-3z"/><path fill="#8900fe" d="M78 458h3v3h-3z"/><path fill="#9101fd" d="M81 458h3v3h-3z"/><path fill="#a602f8" d="M84 458h3v3h-3z"/><path fill="#cb03f1" d="M87 458h3v3h-3z"/><path fill="#eb03ea" d="M90 458h3v3h-3z"/><path fill="#f902e7" d="M93 458h3v3h-3z"/><path fill="#fd01e6" d="M96 458h3v3h-3z"/><path fill="#fe01e5" d="M99 458h3v3h-3z"/><path fill="#fe01e5" d="M102 458h3v3h-3z"/><path fill="#fe01e2" d="M105 458h3v3h-3z"/><path fill="#fe03d9" d="M108 458h3v3h-3z"/><path fill="#fe04b6" d="M111 458h3v3h-3z"/><path fill="#fe0380" d="M114 458h3v3h-3z"/><path fill="#4908fa" d="M51 461h3v3h-3z"/><path fill="#5404fc" d="M54 461h3v3h-3z"/><path fill="#5c01fe" d="M57 461h3v3h-3z"/><path fill="#6200fe" d="M60 461h3v3h-3z"/><path fill="#6700fe" d="M63 461h3v3h-3z"/><path fill="#6d00fe" d="M66 461h3v3h-3z"/><path fill="#7200fe" d="M69 461h3v3h-3z"/><path fill="#7800fe" d="M72 461h3v3h-3z"/><path fill="#7d00fe" d="M75 461h3v3h-3z"/><path fill="#8200fe" d="M78 461h3v3h-3z"/><path fill="#8900fd" d="M81 461h3v3h-3z"/><path fill="#9a00fa" d="M84 461h3v3h-3z"/><path fill="#bc01f3" d="M87 461h3v3h-3z"/><path fill="#e301eb" d="M90 461h3v3h-3z"/><path fill="#f601e7" d="M93 461h3v3h-3z"/><path fill="#fc00e6" d="M96 461h3v3h-3z"/><path fill="#fe00e5" d="M99 461h3v3h-3z"/><path fill="#fe00e5" d="M102 461h3v3h-3z"/><path fill="#fe00e3" d="M105 461h3v3h-3z"/><path fill="#fe01db" d="M108 461h3v3h-3z"/><path fill="#5a00fe" d="M54 464h3v3h-3z"/><path fill="#5c00fe" d="M57 464h3v3h-3z"/><path fill="#5e00fe" d="M60 464h3v3h-3z"/><path fill="#6100fe" d="M63 464h3v3h-3z"/><path fill="#6400fe" d="M66 464h3v3h-3z"/><path fill="#6800fe" d="M69 464h3v3h-3z"/><path fill="#6d00fe" d="M72 464h3v3h-3z"/><path fill="#7300fe" d="M75 464h3v3h-3z"/><path fill="#7900fe" d="M78 464h3v3h-3z"/><path fill="#8000fe" d="M81 464h3v3h-3z"/><path fill="#8d00fc" d="M84 464h3v3h-3z"/><path fill="#ac00f6" d="M87 464h3v3h-3z"/><path fill="#d700ee" d="M90 464h3v3h-3z"/><path fill="#f200e8" d="M93 464h3v3h-3z"/><path fill="#fb00e6" d="M96 464h3v3h-3z"/><path fill="#fe00e6" d="M99 464h3v3h-3z"/><path fill="#fe00e5" d="M102 464h3v3h-3z"/><path fill="#5a00fe" d="M54 467h3v3h-3z"/><path fill="#5b00fe" d="M57 467h3v3h-3z"/><path fill="#5c00fe" d="M60 467h3v3h-3z"/><path fill="#5d00fe" d="M63 467h3v3h-3z"/><path fill="#5f00fe" d="M66 467h3v3h-3z"/><path fill="#6100fe" d="M69 467h3v3h-3z"/><path fill="#6400fe" d="M72 467h3v3h-3z"/><path fill="#6800fe" d="M75 467h3v3h-3z"/><path fill="#6e00fe" d="M78 467h3v3h-3z"/><path fill="#7400fe" d="M81 467h3v3h-3z"/><path fill="#7f00fd" d="M84 467h3v3h-3z"/><path fill="#9900f9" d="M87 467h3v3h-3z"/><path fill="#c600f1" d="M90 467h3v3h-3z"/><path fill="#ec00e9" d="M93 467h3v3h-3z"/><path fill="#fa00e7" d="M96 467h3v3h-3z"/><path fill="#5a00fe" d="M57 470h3v3h-3z"/><path fill="#5b00fe" d="M60 470h3v3h-3z"/><path fill="#5b00fe" d="M63 470h3v3h-3z"/><path fill="#5c00fe" d="M66 470h3v3h-3z"/><path fill="#5d00fe" d="M69 470h3v3h-3z"/><path fill="#5f00fe" d="M72 470h3v3h-3z"/><path fill="#6100fe" d="M75 470h3v3h-3z"/><path fill="#6400fe" d="M78 470h3v3h-3z"/><path fill="#6900fe" d="M81 470h3v3h-3z"/><path fill="#7100fe" d="M84 470h3v3h-3z"/><path fill="#8300fc" d="M87 470h3v3h-3z"/><path fill="#ad00f5" d="M90 470h3v3h-3z"/><path fill="#5a00fe" d="M60 473h3v3h-3z"/><path fill="#5a00fe" d="M63 473h3v3h-3z"/><path fill="#5b00fe" d="M66 473h3v3h-3z"/><path fill="#5b00fe" d="M69 473h3v3h-3z"/><path fill="#5c00fe" d="M72 473h3v3h-3z"/><path fill="#5d00fe" d="M75 473h3v3h-3z"/><path fill="#5f00fe" d="M78 473h3v3h-3z"/><path fill="#6100fe" d="M81 473h3v3h-3z"/><path fill="#6600fe" d="M84 473h3v3h-3z"/></g></g><line x1="113.5" y1="320" x2="113.5" y2="476" stroke="#5aa0a8" stroke-width="1"/><line x1="36" y1="397.5" x2="192" y2="397.5" stroke="#3c7c88" stroke-width="1"/><line x1="54" y1="426.5" x2="132" y2="426.5" stroke="rgba(140,140,140,.75)" stroke-width="1"/><line x1="93.5" y1="387" x2="93.5" y2="465" stroke="rgba(140,140,140,.75)" stroke-width="1"/><circle cx="93.7" cy="426.3" r="1.4" fill="#222"/></svg></div>
<div class="a" style="left:414px;top:22px;width:47px;height:55px;border:1px solid #c8c8c8;border-top:none;background:#f0f0f0"></div>
<div class="rd on" style="left:416px;top:23px"></div>
<div class="t" style="left:423.5px;top:23.8px;font-size:6px;color:#333;-webkit-text-stroke:0">Auto</div>
<div class="rd" style="left:416px;top:31px"></div>
<div class="t" style="left:423.5px;top:32.0px;font-size:6px;color:#333;-webkit-text-stroke:0">Manual</div>
<div class="rd" style="left:416px;top:40px"></div>
<div class="t" style="left:423.5px;top:40.5px;font-size:6px;color:#333;-webkit-text-stroke:0">SS</div>
<div class="a" style="left:416px;top:50px;width:42px;height:10px;background:#e2e2e2;border:1px solid #dadada"></div>
<div class="t" style="left:418.5px;top:52.2px;color:#9a9a9a;-webkit-text-stroke:0">1/8192</div>
<div class="t" style="left:450.0px;top:51.5px;color:#b0b0b0">⌵</div>
<div class="tb tbd" style="left:416px;top:61px;width:23px;height:10px;color:#333">0gain</div>
<div class="ck" style="left:441px;top:63px"></div>
<div class="t" style="left:448.0px;top:63.3px;font-size:6.5px;-webkit-text-stroke:0">DR</div>
<div class="btn dbtn" style="left:417px;top:85px;width:42px;height:13px;">設定</div>
<div class="btn" style="left:417px;top:102px;width:42px;height:13px;">影像擷取</div>
<div class="btn" style="left:417px;top:121px;width:42px;height:12px;">分析</div>
<div class="btn" style="left:417px;top:140px;width:42px;height:26px;">測定</div>
<div class="btn" style="left:417px;top:172px;width:18px;height:13px;font-size:5.3px">立體圖</div>
<div class="btn" style="left:439px;top:172px;width:19px;height:13px;font-size:5.3px">等高線</div>
<div class="btn" style="left:417px;top:190px;width:18px;height:13px;font-size:6.5px">Δ×</div>
<div class="btn" style="left:439px;top:190px;width:19px;height:13px;font-size:6.5px">Δy</div>
<div class="btn" style="left:417px;top:209px;width:18px;height:13px;font-size:6px">Δ×y</div>
<div class="btn" style="left:439px;top:209px;width:19px;height:13px;">色度</div>
<div class="btn" style="left:415px;top:227px;width:45px;height:14px;border:1px solid #6a6ab8;background:#dcdcec">輝度分佈</div>
<div class="t" style="left:398px;top:263px;font-size:7.3px;line-height:8px;height:8px;font-weight:bold;color:#1a1a1a;-webkit-text-stroke:0">cd/m2=20209.176</div>
<div class="a" style="left:464px;top:22px;width:154px;height:117px;background:#000"></div>
<div class="a" style="left:463px;top:139px;width:156px;height:338px;border-left:1px solid #a0a0a0;border-right:1px solid #a0a0a0;border-bottom:1px solid #a0a0a0;background:#f0f0f0"></div>
<div class="a" style="left:465px;top:140px;width:152px;height:157px;background:#fff;border:1px solid #c8c8c8"></div>
<div class="a" style="left:466px;top:141px;width:150px;height:8px;background:#f0f0f0;border-bottom:1px solid #dadada"></div>
<div class="t" style="left:461px;width:30px;text-align:center;top:142.5px;font-family:'Liberation Mono',monospace;font-size:6.2px;letter-spacing:-0.85px;color:#111;-webkit-text-stroke:0.1px #111">C</div>
<div class="t" style="left:472.5px;width:30px;text-align:center;top:142.5px;font-family:'Liberation Mono',monospace;font-size:6.2px;letter-spacing:-0.85px;color:#111;-webkit-text-stroke:0.1px #111">L</div>
<div class="t" style="left:490.5px;width:30px;text-align:center;top:142.5px;font-family:'Liberation Mono',monospace;font-size:6.2px;letter-spacing:-0.85px;color:#111;-webkit-text-stroke:0.1px #111">x</div>
<div class="t" style="left:510px;width:30px;text-align:center;top:142.5px;font-family:'Liberation Mono',monospace;font-size:6.2px;letter-spacing:-0.85px;color:#111;-webkit-text-stroke:0.1px #111">y</div>
<div class="t" style="left:545px;width:30px;text-align:center;top:142.5px;font-family:'Liberation Mono',monospace;font-size:6.2px;letter-spacing:-0.85px;color:#111;-webkit-text-stroke:0.1px #111">cd/m2</div>
<div class="t" style="left:576.5px;width:30px;text-align:center;top:142.5px;font-family:'Liberation Mono',monospace;font-size:6.2px;letter-spacing:-0.85px;color:#111;-webkit-text-stroke:0.1px #111">K</div>
<div class="t" style="left:438.5px;width:40px;text-align:right;top:150px;font-family:'Liberation Mono',monospace;font-size:6.2px;letter-spacing:-0.85px;color:#111;-webkit-text-stroke:0.1px #111">1</div>
<div class="t" style="left:449.5px;width:40px;text-align:right;top:150px;font-family:'Liberation Mono',monospace;font-size:6.2px;letter-spacing:-0.85px;color:#111;-webkit-text-stroke:0.1px #111">1</div>
<div class="t" style="left:473.5px;width:40px;text-align:right;top:150px;font-family:'Liberation Mono',monospace;font-size:6.2px;letter-spacing:-0.85px;color:#111;-webkit-text-stroke:0.1px #111">0.294</div>
<div class="t" style="left:493.5px;width:40px;text-align:right;top:150px;font-family:'Liberation Mono',monospace;font-size:6.2px;letter-spacing:-0.85px;color:#111;-webkit-text-stroke:0.1px #111">0.254</div>
<div class="t" style="left:531.5px;width:40px;text-align:right;top:150px;font-family:'Liberation Mono',monospace;font-size:6.2px;letter-spacing:-0.85px;color:#111;-webkit-text-stroke:0.1px #111">21891.675</div>
<div class="t" style="left:558.5px;width:40px;text-align:right;top:150px;font-family:'Liberation Mono',monospace;font-size:6.2px;letter-spacing:-0.85px;color:#111;-webkit-text-stroke:0.1px #111">10407</div>
<div class="t" style="left:438.5px;width:40px;text-align:right;top:156px;font-family:'Liberation Mono',monospace;font-size:6.2px;letter-spacing:-0.85px;color:#111;-webkit-text-stroke:0.1px #111">2</div>
<div class="t" style="left:449.5px;width:40px;text-align:right;top:156px;font-family:'Liberation Mono',monospace;font-size:6.2px;letter-spacing:-0.85px;color:#111;-webkit-text-stroke:0.1px #111">1</div>
<div class="t" style="left:473.5px;width:40px;text-align:right;top:156px;font-family:'Liberation Mono',monospace;font-size:6.2px;letter-spacing:-0.85px;color:#111;-webkit-text-stroke:0.1px #111">0.296</div>
<div class="t" style="left:493.5px;width:40px;text-align:right;top:156px;font-family:'Liberation Mono',monospace;font-size:6.2px;letter-spacing:-0.85px;color:#111;-webkit-text-stroke:0.1px #111">0.258</div>
<div class="t" style="left:531.5px;width:40px;text-align:right;top:156px;font-family:'Liberation Mono',monospace;font-size:6.2px;letter-spacing:-0.85px;color:#111;-webkit-text-stroke:0.1px #111">20372.079</div>
<div class="t" style="left:558.5px;width:40px;text-align:right;top:156px;font-family:'Liberation Mono',monospace;font-size:6.2px;letter-spacing:-0.85px;color:#111;-webkit-text-stroke:0.1px #111">9722</div>
<div class="t" style="left:438.5px;width:40px;text-align:right;top:161px;font-family:'Liberation Mono',monospace;font-size:6.2px;letter-spacing:-0.85px;color:#111;-webkit-text-stroke:0.1px #111">3</div>
<div class="t" style="left:449.5px;width:40px;text-align:right;top:161px;font-family:'Liberation Mono',monospace;font-size:6.2px;letter-spacing:-0.85px;color:#111;-webkit-text-stroke:0.1px #111">1</div>
<div class="t" style="left:473.5px;width:40px;text-align:right;top:161px;font-family:'Liberation Mono',monospace;font-size:6.2px;letter-spacing:-0.85px;color:#111;-webkit-text-stroke:0.1px #111">0.295</div>
<div class="t" style="left:493.5px;width:40px;text-align:right;top:161px;font-family:'Liberation Mono',monospace;font-size:6.2px;letter-spacing:-0.85px;color:#111;-webkit-text-stroke:0.1px #111">0.256</div>
<div class="t" style="left:531.5px;width:40px;text-align:right;top:161px;font-family:'Liberation Mono',monospace;font-size:6.2px;letter-spacing:-0.85px;color:#111;-webkit-text-stroke:0.1px #111">22463.594</div>
<div class="t" style="left:558.5px;width:40px;text-align:right;top:161px;font-family:'Liberation Mono',monospace;font-size:6.2px;letter-spacing:-0.85px;color:#111;-webkit-text-stroke:0.1px #111">10046</div>
<div class="t" style="left:438.5px;width:40px;text-align:right;top:167px;font-family:'Liberation Mono',monospace;font-size:6.2px;letter-spacing:-0.85px;color:#111;-webkit-text-stroke:0.1px #111">1</div>
<div class="t" style="left:449.5px;width:40px;text-align:right;top:167px;font-family:'Liberation Mono',monospace;font-size:6.2px;letter-spacing:-0.85px;color:#111;-webkit-text-stroke:0.1px #111">2</div>
<div class="t" style="left:473.5px;width:40px;text-align:right;top:167px;font-family:'Liberation Mono',monospace;font-size:6.2px;letter-spacing:-0.85px;color:#111;-webkit-text-stroke:0.1px #111">0.288</div>
<div class="t" style="left:493.5px;width:40px;text-align:right;top:167px;font-family:'Liberation Mono',monospace;font-size:6.2px;letter-spacing:-0.85px;color:#111;-webkit-text-stroke:0.1px #111">0.255</div>
<div class="t" style="left:531.5px;width:40px;text-align:right;top:167px;font-family:'Liberation Mono',monospace;font-size:6.2px;letter-spacing:-0.85px;color:#111;-webkit-text-stroke:0.1px #111">20776.780</div>
<div class="t" style="left:558.5px;width:40px;text-align:right;top:167px;font-family:'Liberation Mono',monospace;font-size:6.2px;letter-spacing:-0.85px;color:#111;-webkit-text-stroke:0.1px #111">10386</div>
<div class="t" style="left:438.5px;width:40px;text-align:right;top:173px;font-family:'Liberation Mono',monospace;font-size:6.2px;letter-spacing:-0.85px;color:#111;-webkit-text-stroke:0.1px #111">2</div>
<div class="t" style="left:449.5px;width:40px;text-align:right;top:173px;font-family:'Liberation Mono',monospace;font-size:6.2px;letter-spacing:-0.85px;color:#111;-webkit-text-stroke:0.1px #111">2</div>
<div class="t" style="left:473.5px;width:40px;text-align:right;top:173px;font-family:'Liberation Mono',monospace;font-size:6.2px;letter-spacing:-0.85px;color:#111;-webkit-text-stroke:0.1px #111">0.299</div>
<div class="t" style="left:493.5px;width:40px;text-align:right;top:173px;font-family:'Liberation Mono',monospace;font-size:6.2px;letter-spacing:-0.85px;color:#111;-webkit-text-stroke:0.1px #111">0.259</div>
<div class="t" style="left:531.5px;width:40px;text-align:right;top:173px;font-family:'Liberation Mono',monospace;font-size:6.2px;letter-spacing:-0.85px;color:#111;-webkit-text-stroke:0.1px #111">20374.251</div>
<div class="t" style="left:558.5px;width:40px;text-align:right;top:173px;font-family:'Liberation Mono',monospace;font-size:6.2px;letter-spacing:-0.85px;color:#111;-webkit-text-stroke:0.1px #111">9332</div>
<div class="t" style="left:438.5px;width:40px;text-align:right;top:179px;font-family:'Liberation Mono',monospace;font-size:6.2px;letter-spacing:-0.85px;color:#111;-webkit-text-stroke:0.1px #111">3</div>
<div class="t" style="left:449.5px;width:40px;text-align:right;top:179px;font-family:'Liberation Mono',monospace;font-size:6.2px;letter-spacing:-0.85px;color:#111;-webkit-text-stroke:0.1px #111">2</div>
<div class="t" style="left:473.5px;width:40px;text-align:right;top:179px;font-family:'Liberation Mono',monospace;font-size:6.2px;letter-spacing:-0.85px;color:#111;-webkit-text-stroke:0.1px #111">0.298</div>
<div class="t" style="left:493.5px;width:40px;text-align:right;top:179px;font-family:'Liberation Mono',monospace;font-size:6.2px;letter-spacing:-0.85px;color:#111;-webkit-text-stroke:0.1px #111">0.257</div>
<div class="t" style="left:531.5px;width:40px;text-align:right;top:179px;font-family:'Liberation Mono',monospace;font-size:6.2px;letter-spacing:-0.85px;color:#111;-webkit-text-stroke:0.1px #111">21026.040</div>
<div class="t" style="left:558.5px;width:40px;text-align:right;top:179px;font-family:'Liberation Mono',monospace;font-size:6.2px;letter-spacing:-0.85px;color:#111;-webkit-text-stroke:0.1px #111">9616</div>
<div class="t" style="left:438.5px;width:40px;text-align:right;top:185px;font-family:'Liberation Mono',monospace;font-size:6.2px;letter-spacing:-0.85px;color:#111;-webkit-text-stroke:0.1px #111">1</div>
<div class="t" style="left:449.5px;width:40px;text-align:right;top:185px;font-family:'Liberation Mono',monospace;font-size:6.2px;letter-spacing:-0.85px;color:#111;-webkit-text-stroke:0.1px #111">3</div>
<div class="t" style="left:473.5px;width:40px;text-align:right;top:185px;font-family:'Liberation Mono',monospace;font-size:6.2px;letter-spacing:-0.85px;color:#111;-webkit-text-stroke:0.1px #111">0.301</div>
<div class="t" style="left:493.5px;width:40px;text-align:right;top:185px;font-family:'Liberation Mono',monospace;font-size:6.2px;letter-spacing:-0.85px;color:#111;-webkit-text-stroke:0.1px #111">0.265</div>
<div class="t" style="left:531.5px;width:40px;text-align:right;top:185px;font-family:'Liberation Mono',monospace;font-size:6.2px;letter-spacing:-0.85px;color:#111;-webkit-text-stroke:0.1px #111">20451.141</div>
<div class="t" style="left:558.5px;width:40px;text-align:right;top:185px;font-family:'Liberation Mono',monospace;font-size:6.2px;letter-spacing:-0.85px;color:#111;-webkit-text-stroke:0.1px #111">9684</div>
<div class="t" style="left:438.5px;width:40px;text-align:right;top:191px;font-family:'Liberation Mono',monospace;font-size:6.2px;letter-spacing:-0.85px;color:#111;-webkit-text-stroke:0.1px #111">2</div>
<div class="t" style="left:449.5px;width:40px;text-align:right;top:191px;font-family:'Liberation Mono',monospace;font-size:6.2px;letter-spacing:-0.85px;color:#111;-webkit-text-stroke:0.1px #111">3</div>
<div class="t" style="left:473.5px;width:40px;text-align:right;top:191px;font-family:'Liberation Mono',monospace;font-size:6.2px;letter-spacing:-0.85px;color:#111;-webkit-text-stroke:0.1px #111">0.301</div>
<div class="t" style="left:493.5px;width:40px;text-align:right;top:191px;font-family:'Liberation Mono',monospace;font-size:6.2px;letter-spacing:-0.85px;color:#111;-webkit-text-stroke:0.1px #111">0.262</div>
<div class="t" style="left:531.5px;width:40px;text-align:right;top:191px;font-family:'Liberation Mono',monospace;font-size:6.2px;letter-spacing:-0.85px;color:#111;-webkit-text-stroke:0.1px #111">19435.062</div>
<div class="t" style="left:558.5px;width:40px;text-align:right;top:191px;font-family:'Liberation Mono',monospace;font-size:6.2px;letter-spacing:-0.85px;color:#111;-webkit-text-stroke:0.1px #111">8897</div>
<div class="t" style="left:438.5px;width:40px;text-align:right;top:196px;font-family:'Liberation Mono',monospace;font-size:6.2px;letter-spacing:-0.85px;color:#111;-webkit-text-stroke:0.1px #111">3</div>
<div class="t" style="left:449.5px;width:40px;text-align:right;top:196px;font-family:'Liberation Mono',monospace;font-size:6.2px;letter-spacing:-0.85px;color:#111;-webkit-text-stroke:0.1px #111">3</div>
<div class="t" style="left:473.5px;width:40px;text-align:right;top:196px;font-family:'Liberation Mono',monospace;font-size:6.2px;letter-spacing:-0.85px;color:#111;-webkit-text-stroke:0.1px #111">0.302</div>
<div class="t" style="left:493.5px;width:40px;text-align:right;top:196px;font-family:'Liberation Mono',monospace;font-size:6.2px;letter-spacing:-0.85px;color:#111;-webkit-text-stroke:0.1px #111">0.263</div>
<div class="t" style="left:531.5px;width:40px;text-align:right;top:196px;font-family:'Liberation Mono',monospace;font-size:6.2px;letter-spacing:-0.85px;color:#111;-webkit-text-stroke:0.1px #111">20509.266</div>
<div class="t" style="left:558.5px;width:40px;text-align:right;top:196px;font-family:'Liberation Mono',monospace;font-size:6.2px;letter-spacing:-0.85px;color:#111;-webkit-text-stroke:0.1px #111">8700</div>
<div class="ck on" style="left:465px;top:300px"></div>
<div class="t" style="left:473.0px;top:300.0px;">位置表示</div>
<div class="grp" style="left:468px;top:312px;width:148px;height:72px;"></div>
<div class="t" style="left:471.0px;top:309.0px;background:#f0f0f0;padding:0 1px;font-size:6.6px;color:#333">cd/m²</div>
<div class="t" style="left:473.0px;top:319.3px;">最大值</div>
<div class="t" style="left:521.6px;width:40px;text-align:right;top:320.1px;font-family:'Liberation Mono',monospace;font-size:6.4px;letter-spacing:-0.9px;color:#1a1a1a;-webkit-text-stroke:0.1px #1a1a1a">22463.594</div>
<div class="a" style="left:592px;top:317px;width:18px;height:12px;border:1px solid #999;background:#f0f0f0"></div>
<div class="t" style="left:473.0px;top:330.1px;">最小值</div>
<div class="t" style="left:521.6px;width:40px;text-align:right;top:330.9px;font-family:'Liberation Mono',monospace;font-size:6.4px;letter-spacing:-0.9px;color:#1a1a1a;-webkit-text-stroke:0.1px #1a1a1a">19435.062</div>
<div class="a" style="left:592px;top:328px;width:18px;height:12px;border:1px solid #999;background:#f0f0f0"></div>
<div class="t" style="left:473.0px;top:340.9px;">平均值</div>
<div class="t" style="left:521.6px;width:40px;text-align:right;top:341.7px;font-family:'Liberation Mono',monospace;font-size:6.4px;letter-spacing:-0.9px;color:#1a1a1a;-webkit-text-stroke:0.1px #1a1a1a">20722.175</div>
<div class="a" style="left:592px;top:339px;width:18px;height:11px;border:1px solid #999;background:#f0f0f0"></div>
<div class="t" style="left:473.0px;top:351.8px;">中心值</div>
<div class="t" style="left:521.6px;width:40px;text-align:right;top:352.6px;font-family:'Liberation Mono',monospace;font-size:6.4px;letter-spacing:-0.9px;color:#1a1a1a;-webkit-text-stroke:0.1px #1a1a1a">20374.251</div>
<div class="a" style="left:592px;top:349px;width:18px;height:12px;border:1px solid #999;background:#f0f0f0"></div>
<div class="t" style="left:473.0px;top:362.6px;">最小值/最大值</div>
<div class="t" style="left:521.6px;width:40px;text-align:right;top:363.4px;font-family:'Liberation Mono',monospace;font-size:6.4px;letter-spacing:-0.9px;color:#1a1a1a;-webkit-text-stroke:0.1px #1a1a1a">86.5</div>
<div class="a" style="left:592px;top:360px;width:18px;height:12px;border:1px solid #999;background:#f0f0f0"></div>
<div class="t" style="left:473.0px;top:373.4px;">標準偏差</div>
<div class="t" style="left:521.6px;width:40px;text-align:right;top:374.2px;font-family:'Liberation Mono',monospace;font-size:6.4px;letter-spacing:-0.9px;color:#1a1a1a;-webkit-text-stroke:0.1px #1a1a1a">0.86</div>
<div class="a" style="left:592px;top:371px;width:18px;height:12px;border:1px solid #999;background:#f0f0f0"></div>
<div class="grp" style="left:468px;top:389px;width:148px;height:54px;"></div>
<div class="t" style="left:471.0px;top:387.0px;background:#f0f0f0;padding:0 1px">色度</div>
<div class="t" style="left:473.0px;top:398.7px;">與中心色差</div>
<div class="t" style="left:521.6px;width:40px;text-align:right;top:399.5px;font-family:'Liberation Mono',monospace;font-size:6.4px;letter-spacing:-0.9px;color:#1a1a1a;-webkit-text-stroke:0.1px #1a1a1a">0.008</div>
<div class="a" style="left:592px;top:397px;width:18px;height:11px;border:1px solid #999;background:#f0f0f0"></div>
<div class="t" style="left:473.0px;top:409.8px;">最大色差</div>
<div class="t" style="left:521.6px;width:40px;text-align:right;top:410.6px;font-family:'Liberation Mono',monospace;font-size:6.4px;letter-spacing:-0.9px;color:#1a1a1a;-webkit-text-stroke:0.1px #1a1a1a">0.014</div>
<div class="a" style="left:592px;top:408px;width:18px;height:11px;border:1px solid #999;background:#f0f0f0"></div>
<div class="t" style="left:473.0px;top:420.9px;">Δ x</div>
<div class="t" style="left:521.6px;width:40px;text-align:right;top:421.7px;font-family:'Liberation Mono',monospace;font-size:6.4px;letter-spacing:-0.9px;color:#1a1a1a;-webkit-text-stroke:0.1px #1a1a1a">0.008</div>
<div class="a" style="left:592px;top:419px;width:18px;height:11px;border:1px solid #999;background:#f0f0f0"></div>
<div class="t" style="left:473.0px;top:432.0px;">Δ y</div>
<div class="t" style="left:521.6px;width:40px;text-align:right;top:432.8px;font-family:'Liberation Mono',monospace;font-size:6.4px;letter-spacing:-0.9px;color:#1a1a1a;-webkit-text-stroke:0.1px #1a1a1a">0.011</div>
<div class="a" style="left:592px;top:430px;width:18px;height:11px;border:1px solid #999;background:#f0f0f0"></div>
<div class="btn" style="left:468px;top:451px;width:49px;height:10px;">判定條件設定</div>
<div class="btn" style="left:568px;top:451px;width:48px;height:10px;">儲存</div>
<div class="btn" style="left:468px;top:464px;width:49px;height:10px;font-family:'Liberation Mono',monospace;font-size:5.5px;letter-spacing:-0.3px;-webkit-text-stroke:0">Excel Report</div>
<div class="ck on" style="left:542px;top:466px"></div>
<div class="t" style="left:548.5px;top:466.0px;">txt檔</div>
<div class="ck on" style="left:568px;top:466px"></div>
<div class="t" style="left:574.5px;top:466.0px;">csv檔</div>
<div class="ck" style="left:590px;top:466px"></div>
<div class="t" style="left:597.5px;top:466.0px;">影像檔</div>
<div class="a" style="left:197px;top:320px;width:150px;height:157px;border:1px solid #707070;background:#f0f0f0"></div>
<div class="t" style="left:210.0px;top:328.0px;">範圍</div>
<div class="a" style="left:233px;top:326px;width:31px;height:10px;background:#e1e1e1;border:1px solid #c0c0c0"></div>
<div class="t" style="left:236.0px;top:328.0px;letter-spacing:-0.3px">FULL</div>
<div class="t" style="left:255.0px;top:327.5px;color:#555">⌵</div>
<div class="t" style="left:256.0px;top:351.7px;">x</div>
<div class="t" style="left:285.0px;top:351.7px;">y</div>
<div class="t" style="left:218.0px;top:361.0px;">基準值</div>
<div class="tb" style="left:253px;top:359px;width:25px;height:10px;font-size:5.4px">0.299</div>
<div class="tb" style="left:282px;top:359px;width:25px;height:10px;font-size:5.4px">0.259</div>
<div class="t" style="left:218.0px;top:372.0px;">平均</div>
<div class="tb tbd" style="left:253px;top:370px;width:25px;height:10px;color:#222;font-size:5.4px">0.297</div>
<div class="tb tbd" style="left:282px;top:369px;width:25px;height:10px;color:#222;font-size:5.4px">0.259</div>
<div class="t" style="left:218.0px;top:388.7px;">合格數量</div>
<div class="tb" style="left:253px;top:386px;width:25px;height:10px;font-size:5.4px;letter-spacing:-0.1px">88.89%</div>
<div class="t" style="left:282.0px;top:387.0px;">(8/9)</div>
<div class="tb tbd" style="left:323px;top:386px;width:20px;height:10px;"></div>
<div class="t" style="left:218.0px;top:400.0px;">平均差</div>
<div class="tb" style="left:253px;top:398px;width:25px;height:10px;font-size:5.4px">0.001</div>
<div class="tb tbd" style="left:323px;top:398px;width:20px;height:10px;"></div>
<div class="t" style="left:218.0px;top:412.0px;">最大色差</div>
<div class="tb tbd" style="left:253px;top:410px;width:25px;height:10px;"></div>
<div class="tb tbd" style="left:323px;top:410px;width:20px;height:10px;"></div>
<div class="btn" style="left:253px;top:432px;width:48px;height:10px;">判定條件設定</div>
<div class="a" style="left:348px;top:398px;width:114px;height:79px;border:1px solid #909090;background:#f0f0f0"></div>
<div class="grp" style="left:354px;top:405px;width:103px;height:33px;"></div>
<div class="t" style="left:358.0px;top:401.5px;background:#f0f0f0;padding:0 1px">校正參數</div>
<div class="tb tbd" style="left:360px;top:412px;width:92px;height:9px;color:#222;letter-spacing:-0.2px">SET 3-200 FS.6</div>
<div class="tb tbd" style="left:360px;top:424px;width:92px;height:9px;"></div>
<div class="grp" style="left:354px;top:447px;width:50px;height:26px;"></div>
<div class="t" style="left:358.0px;top:443.5px;background:#f0f0f0;padding:0 1px">放大</div>
<div class="grp" style="left:408px;top:447px;width:49px;height:26px;"></div>
<div class="t" style="left:411.0px;top:443.5px;background:#f0f0f0;padding:0 1px">多重畫面</div>
<div class="btn" style="left:360px;top:457px;width:13px;height:10px;font-size:5.5px">x2</div>
<div class="btn" style="left:373px;top:457px;width:13px;height:10px;font-size:5.5px">x4</div>
<div class="btn" style="left:386px;top:457px;width:14px;height:10px;font-size:5.5px">x8</div>
<div class="btn" style="left:414px;top:456px;width:13px;height:11px;font-size:5.5px">M</div>
<div class="btn" style="left:427px;top:456px;width:13px;height:11px;font-size:5.5px">S</div>
<div class="btn" style="left:440px;top:456px;width:12px;height:11px;font-size:5.5px">D</div>
<div class="dlg" style="left:122px;top:85px;width:140px;height:202px;border:1px solid #b8b8b8;box-shadow:1px 1px 4px rgba(0,0,0,.35)"><div style="position:absolute;left:0;top:0;right:0;height:12px;background:#fff"></div></div>
<div class="t" style="left:126.0px;top:87.8px;color:#a8a8a8;-webkit-text-stroke:0">測定條件設定</div>
<div class="grp" style="left:129px;top:106px;width:133px;height:98px;"></div>
<div class="t" style="left:132.0px;top:102.3px;background:#f0f0f0;padding:0 1px">影像擷取</div>
<div class="t" style="left:151.0px;top:110.8px;">測定次數</div>
<div class="t" style="left:151.0px;top:121.6px;">輝度</div>
<div class="tb" style="left:178px;top:120px;width:37px;height:10px;">1</div>
<div class="t" style="left:151.0px;top:131.8px;">色度</div>
<div class="tb" style="left:178px;top:132px;width:37px;height:8px;">1</div>
<div class="rd on" style="left:134px;top:146px"></div>
<div class="t" style="left:141.0px;top:146.0px;">單次</div>
<div class="rd" style="left:134px;top:156px"></div>
<div class="t" style="left:141.0px;top:157.0px;">時間間隔</div>
<div class="tb tbd" style="left:179px;top:155px;width:36px;height:8px;">0</div>
<div class="t" style="left:150.0px;top:167.0px;">日</div>
<div class="t" style="left:170.0px;top:167.0px;">時</div>
<div class="t" style="left:188.5px;top:167.0px;">分</div>
<div class="tb tbd" style="left:148px;top:175px;width:18px;height:9px;">0</div>
<div class="tb tbd" style="left:167px;top:175px;width:19px;height:9px;">0</div>
<div class="tb tbd" style="left:188px;top:175px;width:18px;height:9px;">0</div>
<div class="rd" style="left:134px;top:190px"></div>
<div class="t" style="left:141.0px;top:190.8px;">指定時間</div>
<div class="btn" style="left:180px;top:190px;width:30px;height:8px;">設定</div>
<div class="grp" style="left:129px;top:213px;width:133px;height:41px;"></div>
<div class="t" style="left:132.0px;top:209.8px;background:#f0f0f0;padding:0 1px">對比度測定</div>
<div class="rd on" style="left:134px;top:223px"></div>
<div class="t" style="left:141.0px;top:223.5px;">一般</div>
<div class="rd" style="left:134px;top:233px"></div>
<div class="t" style="left:141.0px;top:233.7px;">對比度</div>
<div class="rd" style="left:134px;top:242px"></div>
<div class="t" style="left:141.0px;top:242.8px;">透過率</div>
<div class="t" style="left:188.5px;top:221.5px;">閾值</div>
<div class="tb" style="left:186px;top:232px;width:29px;height:8px;">10</div>
<div class="btn" style="left:128px;top:271px;width:36px;height:10px;">取消</div>
<div class="dlg" style="left:300px;top:85px;width:107px;height:202px;border:1px solid #c0c0c0;box-shadow:1px 1px 4px rgba(0,0,0,.3)"><div style="position:absolute;left:0;top:0;right:0;height:11px;background:#fff"></div></div>
<div class="t" style="left:396.5px;top:88.3px;color:#a0a0a0;font-size:7px;-webkit-text-stroke:0">✕</div>
<div class="grp" style="left:320px;top:106px;width:81px;height:69px;"></div>
<div class="t" style="left:336.3px;top:103.0px;background:#f0f0f0;padding:0 1px">方式</div>
<div class="rd" style="left:335px;top:114px"></div>
<div class="t" style="left:343.0px;top:114.5px;">任意點</div>
<div class="rd on" style="left:335px;top:123px"></div>
<div class="t" style="left:343.0px;top:123.7px;">分割</div>
<div class="rd" style="left:335px;top:132px"></div>
<div class="t" style="left:343.0px;top:132.8px;">自動分割</div>
<div class="rd" style="left:335px;top:142px"></div>
<div class="t" style="left:343.0px;top:142.5px;">畫素</div>
<div class="rd" style="left:335px;top:152px"></div>
<div class="t" style="left:343.0px;top:152.0px;">線分割</div>
<div class="rd" style="left:335px;top:162px"></div>
<div class="t" style="left:343.0px;top:162.0px;">Δ %</div>
<div class="btn" style="left:375px;top:160px;width:20px;height:10px;">設定</div>
<div class="grp" style="left:320px;top:183px;width:81px;height:21px;"></div>
<div class="t" style="left:336.3px;top:179.5px;background:#f0f0f0;padding:0 1px">座標</div>
<div class="rd on" style="left:335px;top:191px"></div>
<div class="t" style="left:343.0px;top:191.5px;">xy</div>
<div class="rd" style="left:365px;top:191px"></div>
<div class="t" style="left:373.0px;top:191.5px;">uv</div>
<div class="grp" style="left:320px;top:214px;width:81px;height:41px;"></div>
<div class="grp" style="left:320px;top:219px;width:76px;height:15px;"></div>
<div class="t" style="left:337.5px;top:225.7px;">risa</div>
<div class="ck" style="left:360px;top:226px"></div>
<div class="t" style="left:367.5px;top:225.7px;">bitmap</div>
<div class="tb" style="left:320px;top:240px;width:51px;height:10px;"></div>
<div class="btn" style="left:376px;top:240px;width:20px;height:10px;">路徑</div>
<div class="btn" style="left:353px;top:271px;width:36px;height:10px;">確定</div>
<div class="a" style="left:406px;top:85px;width:4px;height:171px;background:#e8e8e8;border-left:1px solid #d0d0d0"></div>
<div class="a" style="left:407px;top:115px;width:3px;height:1px;background:#3f7878"></div>
<div class="a" style="left:407px;top:131px;width:3px;height:1px;background:#3f7878"></div>
<div class="a" style="left:407px;top:146px;width:3px;height:1px;background:#3f7878"></div>
<div class="a" style="left:407px;top:162px;width:3px;height:0px;background:#3f7878"></div>
<div class="a" style="left:407px;top:177px;width:3px;height:1px;background:#3f7878"></div>
<div class="a" style="left:407px;top:192px;width:3px;height:1px;background:#3f7878"></div>
<div class="a" style="left:407px;top:208px;width:3px;height:1px;background:#3f7878"></div>
<div class="a" style="left:407px;top:223px;width:3px;height:1px;background:#3f7878"></div>
<div class="a" style="left:407px;top:238px;width:3px;height:2px;background:#3f7878"></div>
<div class="a" style="left:407px;top:254px;width:3px;height:1px;background:#3f7878"></div>
<div class="dlg" style="left:194px;top:58px;width:142px;height:256px;border:1px solid #7cb8e0;box-shadow:1px 1px 3px rgba(0,0,0,.25)"><div style="position:absolute;left:0;top:0;right:0;height:12px;background:#fff"></div></div>
<div class="t" style="left:197.0px;top:61.2px;color:#222">分割測定條件設定</div>
<div class="t" style="left:325.5px;top:61.0px;color:#333;font-size:7px;-webkit-text-stroke:0">✕</div>
<div class="t" style="left:219.0px;top:76.0px;">分割數</div>
<div class="t" style="left:262.0px;top:76.0px;">內縮</div>
<div class="t" style="left:207.0px;top:87.0px;">X:</div>
<div class="tb" style="left:219px;top:86px;width:29px;height:9px;">3</div>
<div class="tb" style="left:262px;top:86px;width:29px;height:9px;">0</div>
<div class="t" style="left:207.0px;top:98.5px;">Y:</div>
<div class="tb" style="left:219px;top:96px;width:29px;height:10px;">3</div>
<div class="tb" style="left:262px;top:96px;width:29px;height:10px;">0</div>
<div class="rd on" style="left:295px;top:94px"></div>
<div class="t" style="left:303.0px;top:95.0px;">%</div>
<div class="rd" style="left:295px;top:102px"></div>
<div class="t" style="left:303.5px;top:102.6px;">mm</div>
<div class="t" style="left:206.4px;top:120.0px;">測定尺寸</div>
<div class="tb" style="left:262px;top:118px;width:29px;height:10px;">3</div>
<div class="rd on" style="left:295px;top:115px"></div>
<div class="t" style="left:303.5px;top:115.8px;">畫素</div>
<div class="rd" style="left:295px;top:123px"></div>
<div class="t" style="left:303.5px;top:123.8px;">mm</div>
<div class="grp" style="left:201px;top:141px;width:128px;height:45px;"></div>
<div class="t" style="left:205.0px;top:137.5px;background:#f0f0f0;padding:0 1px">測定區域</div>
<div class="rd on" style="left:218px;top:150px"></div>
<div class="t" style="left:226.0px;top:150.2px;">圓形</div>
<div class="rd" style="left:273px;top:150px"></div>
<div class="t" style="left:281.0px;top:150.2px;">方形</div>
<div class="rd on" style="left:218px;top:161px"></div>
<div class="t" style="left:226.0px;top:161.1px;">交叉點</div>
<div class="rd" style="left:273px;top:161px"></div>
<div class="t" style="left:281.0px;top:161.1px;">中央點</div>
<div class="ck" style="left:275px;top:173px"></div>
<div class="t" style="left:282.0px;top:173.0px;">自由矩形</div>
<div class="grp" style="left:201px;top:202px;width:128px;height:22px;"></div>
<div class="t" style="left:205.0px;top:198.6px;background:#f0f0f0;padding:0 1px">測定區域選擇</div>
<div class="ck" style="left:220px;top:212px"></div>
<div class="t" style="left:227.0px;top:212.0px;">確認</div>
<div class="btn" style="left:274px;top:210px;width:35px;height:10px;">擷取</div>
<div class="grp" style="left:201px;top:240px;width:128px;height:22px;"></div>
<div class="t" style="left:205.0px;top:237.0px;background:#f0f0f0;padding:0 1px">基準點</div>
<div class="t" style="left:219.5px;top:250.1px;">X</div>
<div class="tb" style="left:242px;top:248px;width:17px;height:10px;">1</div>
<div class="t" style="left:274.5px;top:250.1px;">Y</div>
<div class="tb" style="left:292px;top:248px;width:17px;height:10px;">1</div>
<div class="btn" style="left:201px;top:275px;width:35px;height:10px;">區域確認</div>
<div class="btn" style="left:295px;top:275px;width:35px;height:10px;">區域設定</div>
<div class="btn" style="left:201px;top:298px;width:35px;height:10px;">取消</div>
<div class="btn dbtn" style="left:295px;top:298px;width:35px;height:10px;">確定</div>
</body></html>
